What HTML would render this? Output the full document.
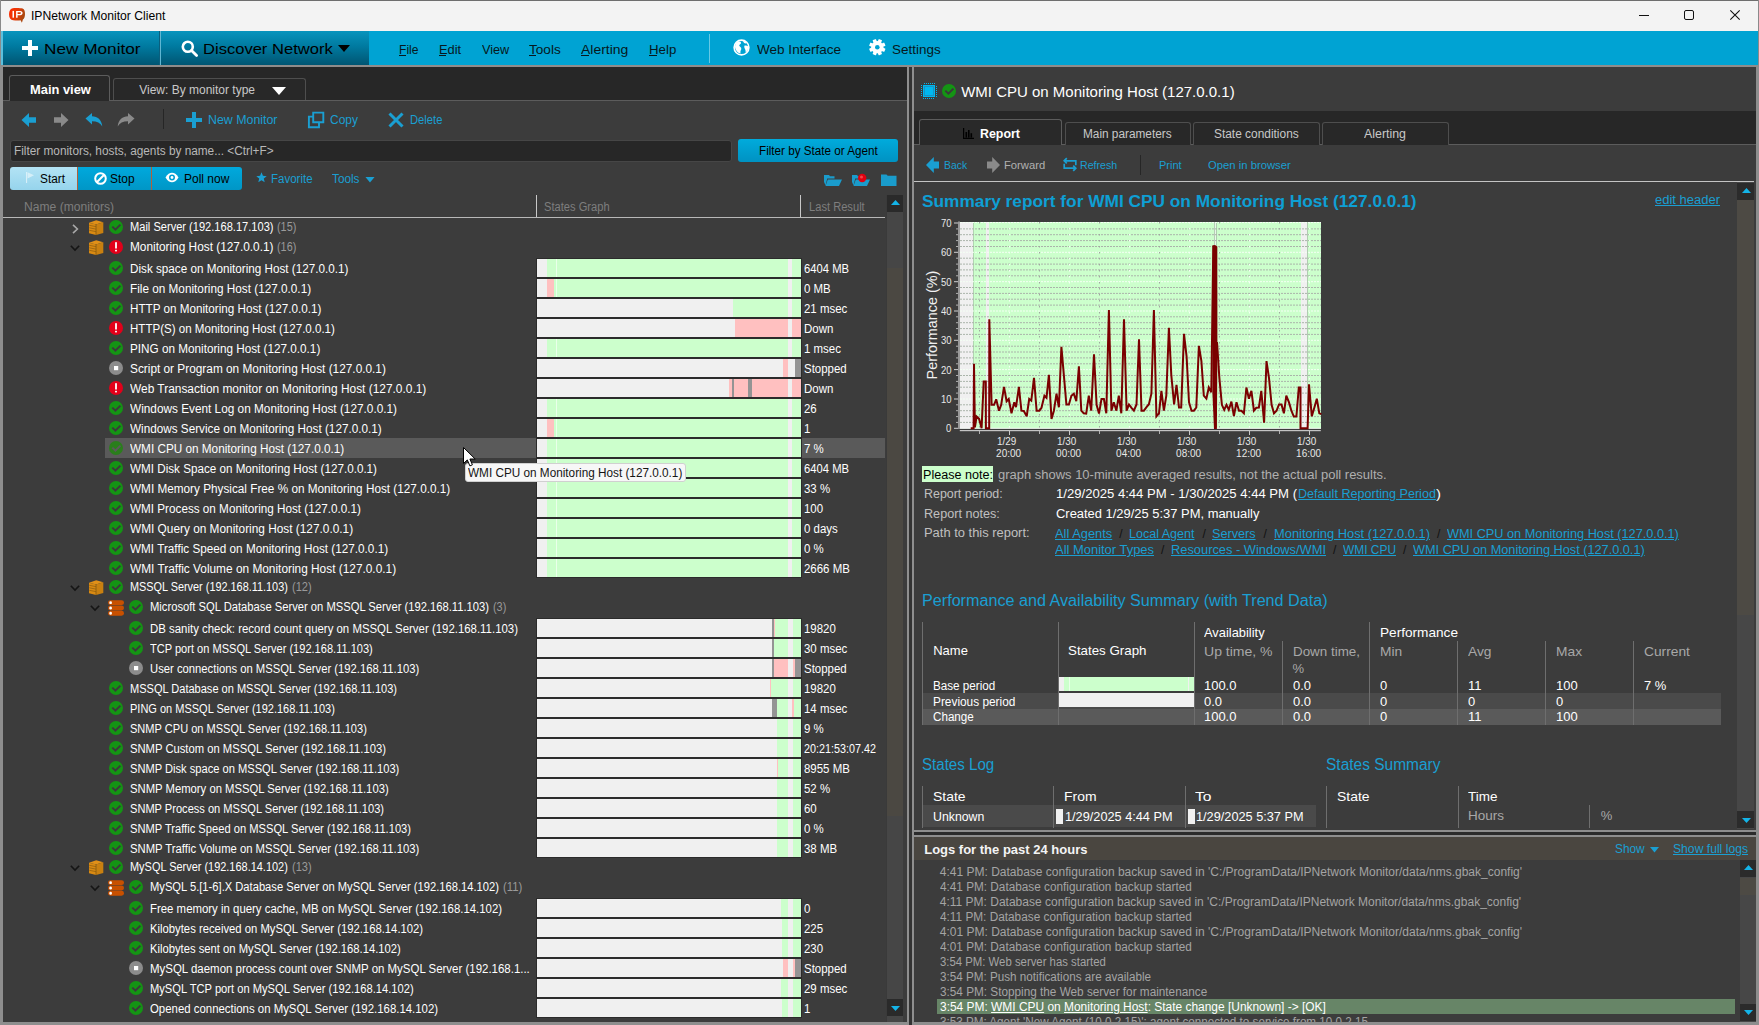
<!DOCTYPE html><html><head><meta charset="utf-8"><title>IPNetwork Monitor Client</title><style>
*{margin:0;padding:0;box-sizing:border-box}
html,body{width:1759px;height:1025px;overflow:hidden;background:#3c3c3c;font-family:"Liberation Sans", sans-serif;}
.t{position:absolute;white-space:pre;}
.r{position:absolute;}
svg{position:absolute;overflow:visible}
.u{text-decoration:underline;}
</style></head><body><div class="r" style="left:0px;top:0px;width:1759px;height:31px;background:#f3f3f3;"></div><div class="r" style="left:0px;top:0px;width:1759px;height:1px;background:#6e6e6e;"></div><div class="r" style="left:0px;top:0px;width:1px;height:31px;background:#8a8a8a;"></div><div class="r" style="left:1758px;top:0px;width:1px;height:31px;background:#8a8a8a;"></div><svg style="left:8px;top:7px" width="18" height="17" viewBox="0 0 18 17"><defs><linearGradient id="lg" x1="0" y1="0" x2="1" y2="0.3"><stop offset="0" stop-color="#ff2a00"/><stop offset="0.55" stop-color="#e83a08"/><stop offset="1" stop-color="#a84810"/></linearGradient></defs><path d="M6 1.1C9 0.8 12.5 0.9 14.6 1.6 16.4 2.2 17 4.3 17 7 17 9.6 16.3 11.8 14.9 12.6L13.9 15.7 12.6 13.3C10.5 13.6 7.5 13.5 5.2 13.2 2.6 12.8 1 11 1 7.2 1 3.7 2.6 1.4 6 1.1z" fill="url(#lg)"/><rect x="4.5" y="3.9" width="1.5" height="6.8" fill="#fff"/><path d="M8.1 3.9H12.3C13.8 3.9 14.6 4.9 14.6 6.1 14.6 7.3 13.8 8.3 12.3 8.3H9.6V10.7H8.1zM9.6 5.2V7H12C12.6 7 13 6.6 13 6.1 13 5.6 12.6 5.2 12 5.2z" fill="#fff" fill-rule="evenodd"/></svg><div class="t" style="left:30.50px;top:10px;font-size:12px;line-height:12px;color:#000;transform:scaleX(1.0119);transform-origin:0 0;">IPNetwork Monitor Client</div><div class="r" style="left:1639px;top:15px;width:10px;height:1px;background:#111;"></div><div class="r" style="left:1684px;top:10px;width:10px;height:10px;border:1px solid #111;border-radius:2px"></div><svg style="left:1730px;top:10px" width="10" height="10" viewBox="0 0 10 10"><path d="M0.3 0.3L9.7 9.7M9.7 0.3L0.3 9.7" stroke="#111" stroke-width="1.1"/></svg><div class="r" style="left:0px;top:31px;width:1759px;height:34px;background:#00a3d3;"></div><div class="r" style="left:0px;top:31px;width:1px;height:36px;background:#8a8a8a;"></div><div class="r" style="left:1px;top:31px;width:2px;height:34px;background:#5cc0de;"></div><div class="r" style="left:1758px;top:31px;width:1px;height:36px;background:#8a8a8a;"></div><div class="r" style="left:3px;top:31px;width:156px;height:34px;background:linear-gradient(#0894bd,#007aa0 45%,#005572);"></div><div class="r" style="left:159px;top:31px;width:1px;height:34px;background:#0a5f7e;"></div><div class="r" style="left:160px;top:31px;width:1px;height:34px;background:#5fb6d2;"></div><div class="r" style="left:161px;top:31px;width:208px;height:34px;background:linear-gradient(#0894bd,#007aa0 45%,#005572);"></div><div class="r" style="left:0px;top:65px;width:1759px;height:2px;background:#8f8c8b;"></div><div class="r" style="left:22px;top:46px;width:16px;height:4px;background:#fff;"></div><div class="r" style="left:28px;top:40px;width:4px;height:16px;background:#fff;"></div><div class="t" style="left:43.80px;top:41px;font-size:15px;line-height:15px;color:#000;transform:scaleX(1.1472);transform-origin:0 0;">New Monitor</div><svg style="left:181px;top:40px" width="17" height="17" viewBox="0 0 17 17"><circle cx="6.8" cy="6.8" r="5" stroke="#fff" stroke-width="2.6" fill="none"/><path d="M10.5 10.5L15.6 15.6" stroke="#fff" stroke-width="2.8" stroke-linecap="round"/></svg><div class="t" style="left:203.00px;top:41px;font-size:15px;line-height:15px;color:#000;transform:scaleX(1.1035);transform-origin:0 0;">Discover Network</div><svg style="left:338px;top:45px" width="12" height="7" viewBox="0 0 12 7"><path d="M0 0h12L6 7z" fill="#000"/></svg><div class="t" style="left:399.10px;top:44px;font-size:12.5px;line-height:12.5px;color:#061820;transform:scaleX(0.9674);transform-origin:0 0;">File</div><div class="r" style="left:399px;top:55px;width:7px;height:1px;background:#061820;"></div><div class="t" style="left:439.10px;top:44px;font-size:12.5px;line-height:12.5px;color:#061820;transform:scaleX(1.0303);transform-origin:0 0;">Edit</div><div class="r" style="left:439px;top:55px;width:7px;height:1px;background:#061820;"></div><div class="t" style="left:482.20px;top:44px;font-size:12.5px;line-height:12.5px;color:#061820;transform:scaleX(1.0158);transform-origin:0 0;">View</div><div class="t" style="left:528.80px;top:44px;font-size:12.5px;line-height:12.5px;color:#061820;transform:scaleX(1.0861);transform-origin:0 0;">Tools</div><div class="r" style="left:529px;top:55px;width:7px;height:1px;background:#061820;"></div><div class="t" style="left:581.00px;top:44px;font-size:12.5px;line-height:12.5px;color:#061820;transform:scaleX(1.1158);transform-origin:0 0;">Alerting</div><div class="r" style="left:581px;top:55px;width:8px;height:1px;background:#061820;"></div><div class="t" style="left:649.20px;top:44px;font-size:12.5px;line-height:12.5px;color:#061820;transform:scaleX(1.0615);transform-origin:0 0;">Help</div><div class="r" style="left:649px;top:55px;width:8px;height:1px;background:#061820;"></div><div class="r" style="left:709px;top:34px;width:1px;height:29px;background:#66c9e6;"></div><svg style="left:733px;top:39px" width="17" height="17" viewBox="0 0 17 17"><circle cx="8.5" cy="8.5" r="7.4" fill="#00a3d3" stroke="#fff" stroke-width="1.6"/><path d="M3 4.2C4.3 2.6 6.6 2.1 7.8 3.2 8.6 4 7.6 5 6.8 5.5 6 6 6.1 7 6.9 7.6 7.9 8.4 8.7 9.4 8.1 10.7 7.6 11.7 7.2 12.7 7.6 14.6 5 14 2.9 11.8 2.2 9.2 1.8 7.3 2.1 5.5 3 4.2z M10 1.8C11.5 2.1 12.9 2.9 13.9 4 13 4.6 11.8 4.5 11.1 3.9 10.6 3.4 10.2 2.7 10 1.8z M11.6 6.6C12.9 6.2 14.5 6.6 15.4 7.5 15.5 10 14.5 12.3 12.7 13.6 12.5 12.3 12.7 11.2 12.1 10.3 11.4 9.4 10.9 7.3 11.6 6.6z" fill="#fff"/></svg><div class="t" style="left:757.40px;top:43px;font-size:13px;line-height:13px;color:#061820;transform:scaleX(1.0421);transform-origin:0 0;">Web Interface</div><svg style="left:868.5px;top:38.8px" width="17" height="17" viewBox="0 0 17 17"><g fill="#fff" transform="translate(8.3 8.2)"><rect x="-1.8" y="-8.2" width="3.6" height="4" rx="0.6" transform="rotate(22.5)"/><rect x="-1.8" y="-8.2" width="3.6" height="4" rx="0.6" transform="rotate(67.5)"/><rect x="-1.8" y="-8.2" width="3.6" height="4" rx="0.6" transform="rotate(112.5)"/><rect x="-1.8" y="-8.2" width="3.6" height="4" rx="0.6" transform="rotate(157.5)"/><rect x="-1.8" y="-8.2" width="3.6" height="4" rx="0.6" transform="rotate(202.5)"/><rect x="-1.8" y="-8.2" width="3.6" height="4" rx="0.6" transform="rotate(247.5)"/><rect x="-1.8" y="-8.2" width="3.6" height="4" rx="0.6" transform="rotate(292.5)"/><rect x="-1.8" y="-8.2" width="3.6" height="4" rx="0.6" transform="rotate(337.5)"/><circle r="6.1"/></g><circle cx="8.3" cy="8.2" r="2.3" fill="#00a3d3"/></svg><div class="t" style="left:891.90px;top:43px;font-size:13px;line-height:13px;color:#061820;transform:scaleX(1.0365);transform-origin:0 0;">Settings</div><div class="r" style="left:0px;top:67px;width:3px;height:958px;background:#8e8e8e;"></div><div class="r" style="left:0px;top:1022px;width:1759px;height:3px;background:#8e8e8e;"></div><div class="r" style="left:1756px;top:67px;width:3px;height:958px;background:#8e8e8e;"></div><div class="r" style="left:3px;top:67px;width:904px;height:33px;background:#272727;"></div><div class="r" style="left:3px;top:100px;width:904px;height:922px;background:#3c3c3c;"></div><div class="r" style="left:907px;top:67px;width:2px;height:955px;background:#8f8f8f;"></div><div class="r" style="left:909px;top:67px;width:3px;height:958px;background:#333333;"></div><div class="r" style="left:912px;top:67px;width:2px;height:955px;background:#8f8f8f;"></div><div class="r" style="left:9px;top:75px;width:101px;height:26px;background:#292929;border:1px solid #5c5c5c;border-bottom:none;border-radius:3px 3px 0 0"></div><div class="r" style="left:3px;top:100px;width:6px;height:1px;background:#5c5c5c;"></div><div class="r" style="left:110px;top:100px;width:797px;height:1px;background:#5c5c5c;"></div><div class="t" style="left:29.50px;top:84px;font-size:12px;line-height:12px;color:#ffffff;font-weight:bold;transform:scaleX(1.0743);transform-origin:0 0;">Main view</div><div class="r" style="left:113px;top:78px;width:193px;height:22px;background:#282828;border:1px solid #4e4e4e;border-bottom:none;border-radius:3px 3px 0 0"></div><div class="t" style="left:139.20px;top:84px;font-size:12px;line-height:12px;color:#c8c8c8;">View: By monitor type</div><svg style="left:271.5px;top:86.5px" width="14" height="8" viewBox="0 0 14 8"><path d="M0 0h14L7 8z" fill="#fff"/></svg><svg style="left:21px;top:112px" width="16" height="16" viewBox="0 0 16 16"><path d="M0.5 8L8 1v4.2h7v5.6H8V15z" fill="#1a9fd2"/></svg><svg style="left:53px;top:112px" width="16" height="16" viewBox="0 0 16 16"><path d="M15.5 8L8 1v4.2H1v5.6h7V15z" fill="#8a8a8a"/></svg><svg style="left:85px;top:112px" width="18" height="16" viewBox="0 0 18 16"><path d="M0.5 6.5L7 1v3.3c5.5 0 9.5 3.5 10.3 10.2C15.5 11 12 9.3 7 9.3V12.5z" fill="#1a9fd2"/></svg><svg style="left:117px;top:112px" width="18" height="16" viewBox="0 0 18 16"><path d="M17.5 6.5L11 1v3.3C5.5 4.3 1.5 7.8 0.7 14.5 2.5 11 6 9.3 11 9.3V12.5z" fill="#8a8a8a"/></svg><div class="r" style="left:163px;top:109px;width:1px;height:20px;background:#262626;"></div><div class="r" style="left:185.5px;top:117.5px;width:16.5px;height:4px;background:#1a9fd2;"></div><div class="r" style="left:191.8px;top:111.5px;width:4px;height:16.5px;background:#1a9fd2;"></div><div class="t" style="left:208.30px;top:114px;font-size:12px;line-height:12px;color:#1a9fd2;transform:scaleX(1.0318);transform-origin:0 0;">New Monitor</div><svg style="left:307px;top:111px" width="18" height="18" viewBox="0 0 18 18"><path d="M6.2 1.6H16.3V11.2H6.2z" fill="none" stroke="#1a9fd2" stroke-width="1.9"/><path d="M6.2 5.6H1.9V16.2H12V11.2" fill="none" stroke="#1a9fd2" stroke-width="1.9"/></svg><div class="t" style="left:330.00px;top:114px;font-size:12px;line-height:12px;color:#1a9fd2;transform:scaleX(0.9959);transform-origin:0 0;">Copy</div><svg style="left:388px;top:112px" width="16" height="16" viewBox="0 0 16 16"><path d="M1.5 1.5L14.5 14.5M14.5 1.5L1.5 14.5" stroke="#1a9fd2" stroke-width="3"/></svg><div class="t" style="left:410.40px;top:114px;font-size:12px;line-height:12px;color:#1a9fd2;transform:scaleX(0.9341);transform-origin:0 0;">Delete</div><div class="r" style="left:10px;top:140px;width:722px;height:22px;background:#272727;border:1px solid #464646;border-radius:3px"></div><div class="t" style="left:14.20px;top:145px;font-size:12px;line-height:12px;color:#b8b8b8;transform:scaleX(0.9841);transform-origin:0 0;">Filter monitors, hosts, agents by name... &lt;Ctrl+F&gt;</div><div class="r" style="left:738px;top:139px;width:160px;height:23px;background:linear-gradient(#00abdc,#0092c2);border-radius:3px"></div><div class="t" style="left:758.70px;top:145px;font-size:12px;line-height:12px;color:#000;transform:scaleX(0.9733);transform-origin:0 0;">Filter by State or Agent</div><div class="r" style="left:10px;top:167px;width:67px;height:23px;background:linear-gradient(#b3e3f5,#96d4ec);border-radius:3px 0 0 3px"></div><div class="r" style="left:77px;top:167px;width:1px;height:23px;background:#b0603a;"></div><div class="r" style="left:78px;top:167px;width:73px;height:23px;background:linear-gradient(#00a9dd,#0096c6);"></div><div class="r" style="left:151px;top:167px;width:1px;height:23px;background:#b0603a;"></div><div class="r" style="left:152px;top:167px;width:90px;height:23px;background:linear-gradient(#00a9dd,#0096c6);border-radius:0 3px 3px 0"></div><svg style="left:26px;top:172px" width="9" height="11" viewBox="0 0 9 11"><rect x="0" y="0" width="1.1" height="11" fill="#e4f4fa" opacity="0.8"/><path d="M1.5 0.3L8 3.3 1.5 6.4z" fill="#e4f4fa" opacity="0.75"/></svg><div class="t" style="left:40.00px;top:173px;font-size:12.5px;line-height:12.5px;color:#000;transform:scaleX(0.9467);transform-origin:0 0;">Start</div><svg style="left:93.5px;top:171.5px" width="13" height="13" viewBox="0 0 13 13"><circle cx="6.5" cy="6.5" r="5.3" stroke="#fff" stroke-width="2" fill="none"/><path d="M2.8 10.2L10.2 2.8" stroke="#fff" stroke-width="2"/></svg><div class="t" style="left:110.00px;top:173px;font-size:12.5px;line-height:12.5px;color:#000;transform:scaleX(0.9565);transform-origin:0 0;">Stop</div><svg style="left:164.5px;top:172.3px" width="14" height="11" viewBox="0 0 14 11"><path d="M0.5 5.5C2.5 2 4.8 0.8 7 0.8S11.5 2 13.5 5.5C11.5 9 9.2 10.2 7 10.2S2.5 9 0.5 5.5z" fill="#fff"/><circle cx="7" cy="5.5" r="3" fill="#00a0d2"/><circle cx="7" cy="5.5" r="1.4" fill="#fff"/></svg><div class="t" style="left:184.30px;top:173px;font-size:12.5px;line-height:12.5px;color:#000;transform:scaleX(0.9587);transform-origin:0 0;">Poll now</div><svg style="left:256px;top:172.3px" width="11" height="11" viewBox="0 0 12 12"><path d="M6 0.3l1.6 3.9 4.1 0.3-3.2 2.7 1 4.1L6 9 2.5 11.3l1-4.1L0.3 4.5l4.1-0.3z" fill="#1a9fd2"/></svg><div class="t" style="left:271.40px;top:173px;font-size:12px;line-height:12px;color:#1a9fd2;transform:scaleX(0.9594);transform-origin:0 0;">Favorite</div><div class="t" style="left:332.20px;top:173px;font-size:12px;line-height:12px;color:#1a9fd2;transform:scaleX(0.9816);transform-origin:0 0;">Tools</div><svg style="left:364.5px;top:176.8px" width="10" height="5.5" viewBox="0 0 10 6"><path d="M0 0h10L5 6z" fill="#1a9fd2"/></svg><svg style="left:824px;top:174px" width="18" height="13" viewBox="0 0 18 13"><path d="M0 1h5l1 1.2h4.5v2.3H3.2L1.6 11.5 0 8z" fill="#1a9ccc"/><path d="M3.8 5.5H18l-3 6.5H1.5z" fill="#1a9ccc"/></svg><svg style="left:852px;top:174px" width="18" height="13" viewBox="0 0 18 13"><path d="M0 1h5l1 1.2h4.5v2.3H3.2L1.6 11.5 0 8z" fill="#1a9ccc"/><path d="M3.8 5.5H18l-3 6.5H1.5z" fill="#1a9ccc"/><circle cx="10.2" cy="4" r="4.2" fill="#e00010"/><circle cx="9.5" cy="3" r="1.5" fill="#ff6060" opacity="0.7"/></svg><svg style="left:881px;top:174px" width="16" height="12" viewBox="0 0 16 12"><path d="M0 0.5h5.5l1.2 1.2H15.5V12H0z" fill="#1a9ccc"/></svg><div class="t" style="left:24.30px;top:201px;font-size:12px;line-height:12px;color:#7e7e7e;transform:scaleX(1.0083);transform-origin:0 0;">Name (monitors)</div><div class="r" style="left:536px;top:195px;width:1px;height:22px;background:#c8c8c8;"></div><div class="t" style="left:544.30px;top:201px;font-size:12px;line-height:12px;color:#7e7e7e;transform:scaleX(0.9276);transform-origin:0 0;">States Graph</div><div class="r" style="left:800px;top:195px;width:1px;height:22px;background:#c8c8c8;"></div><div class="t" style="left:808.50px;top:201px;font-size:12px;line-height:12px;color:#7e7e7e;transform:scaleX(0.9279);transform-origin:0 0;">Last Result</div><div class="r" style="left:3px;top:217px;width:882px;height:1px;background:#b8b8b8;"></div><div class="r" style="left:886px;top:195px;width:17px;height:827px;background:#464646;"></div><div class="r" style="left:886px;top:195px;width:1px;height:827px;background:#3a3a3a;"></div><div class="r" style="left:887px;top:195px;width:16px;height:17px;background:#2a2a2a;"></div><svg style="left:891px;top:200px" width="9" height="5" viewBox="0 0 9 5"><path d="M0 5h9L4.5 0z" fill="#14b4e8"/></svg><div class="r" style="left:887px;top:268px;width:16px;height:548px;background:#4b4842;"></div><div class="r" style="left:887px;top:999px;width:16px;height:17px;background:#2a2a2a;"></div><svg style="left:891px;top:1006px" width="9" height="5" viewBox="0 0 9 5"><path d="M0 0h9L4.5 5z" fill="#14b4e8"/></svg><svg style="left:71.5px;top:224px" width="7" height="10" viewBox="0 0 7 10"><path d="M1 0.8L5.4 5 1 9.2" stroke="#a8a8a8" stroke-width="1.6" fill="none"/></svg><svg style="left:88.8px;top:220px" width="15" height="15" viewBox="0 0 15 15"><path d="M0 2.8L7.2 0.2 14.3 2.2 7 4.4z" fill="#e09018"/><path d="M0 2.8L7 4.4V14.9L0 13.2z" fill="#d98a12"/><path d="M7 4.4L14.3 2.2V13L7 14.9z" fill="#c98010"/><path d="M0.3 5.3L6.8 6.6M0.3 7.8L6.8 9.1M0.3 10.3L6.8 11.6" stroke="#8a5a10" stroke-width="0.7"/><path d="M7 4.4V14.9" stroke="#6a4a10" stroke-width="0.6"/></svg><svg style="left:109px;top:220px" width="14" height="14" viewBox="0 0 14 14"><circle cx="7" cy="7" r="7" fill="#149414"/><path d="M3.3 6.6L6.4 9.7L11.4 4.6" stroke="#3a3a3a" stroke-width="2" fill="none"/></svg><div class="t" style="left:130.30px;top:221px;font-size:12px;line-height:12px;color:#ffffff;transform:scaleX(0.9233);transform-origin:0 0;">Mail Server (192.168.17.103)</div><div class="t" style="left:277.40px;top:221px;font-size:12px;line-height:12px;color:#9a9a9a;transform:scaleX(0.9042);transform-origin:0 0;">(15)</div><svg style="left:69.5px;top:245px" width="10" height="6" viewBox="0 0 10 6"><path d="M0.8 0.8L5 5 9.2 0.8" stroke="#151515" stroke-width="1.6" fill="none"/></svg><svg style="left:88.8px;top:240px" width="15" height="15" viewBox="0 0 15 15"><path d="M0 2.8L7.2 0.2 14.3 2.2 7 4.4z" fill="#e09018"/><path d="M0 2.8L7 4.4V14.9L0 13.2z" fill="#d98a12"/><path d="M7 4.4L14.3 2.2V13L7 14.9z" fill="#c98010"/><path d="M0.3 5.3L6.8 6.6M0.3 7.8L6.8 9.1M0.3 10.3L6.8 11.6" stroke="#8a5a10" stroke-width="0.7"/><path d="M7 4.4V14.9" stroke="#6a4a10" stroke-width="0.6"/></svg><svg style="left:109px;top:240px" width="14" height="14" viewBox="0 0 14 14"><circle cx="7" cy="7" r="7" fill="#e2001a"/><rect x="6.1" y="2.2" width="1.8" height="6.3" fill="#fff"/><rect x="6.1" y="9.8" width="1.8" height="1.6" fill="#fff"/></svg><div class="t" style="left:130.30px;top:241px;font-size:12px;line-height:12px;color:#ffffff;transform:scaleX(0.9869);transform-origin:0 0;">Monitoring Host (127.0.0.1)</div><div class="t" style="left:277.40px;top:241px;font-size:12px;line-height:12px;color:#9a9a9a;transform:scaleX(0.9042);transform-origin:0 0;">(16)</div><svg style="left:109px;top:261px" width="14" height="14" viewBox="0 0 14 14"><circle cx="7" cy="7" r="7" fill="#149414"/><path d="M3.3 6.6L6.4 9.7L11.4 4.6" stroke="#3a3a3a" stroke-width="2" fill="none"/></svg><div class="t" style="left:130.30px;top:263px;font-size:12px;line-height:12px;color:#ffffff;transform:scaleX(0.9741);transform-origin:0 0;">Disk space on Monitoring Host (127.0.0.1)</div><div class="r" style="left:536px;top:258px;width:266px;height:20px;background:#2b2b2b;"></div><div class="r" style="left:537px;top:259px;width:264px;height:18px;background:#f0f0f0;"></div><div class="r" style="left:547px;top:259px;width:241px;height:18px;background:#ccffcc;"></div><div class="r" style="left:556px;top:259px;width:1px;height:18px;background:#eaffea;"></div><div class="r" style="left:792px;top:259px;width:9px;height:18px;background:#ccffcc;"></div><div class="t" style="left:804.00px;top:263px;font-size:12px;line-height:12px;color:#ffffff;transform:scaleX(0.9369);transform-origin:0 0;">6404 MB</div><svg style="left:109px;top:281px" width="14" height="14" viewBox="0 0 14 14"><circle cx="7" cy="7" r="7" fill="#149414"/><path d="M3.3 6.6L6.4 9.7L11.4 4.6" stroke="#3a3a3a" stroke-width="2" fill="none"/></svg><div class="t" style="left:130.30px;top:283px;font-size:12px;line-height:12px;color:#ffffff;transform:scaleX(0.9802);transform-origin:0 0;">File on Monitoring Host (127.0.0.1)</div><div class="r" style="left:536px;top:278px;width:266px;height:20px;background:#2b2b2b;"></div><div class="r" style="left:537px;top:279px;width:264px;height:18px;background:#f0f0f0;"></div><div class="r" style="left:547px;top:279px;width:241px;height:18px;background:#ccffcc;"></div><div class="r" style="left:547px;top:279px;width:7px;height:18px;background:#ffc0c0;"></div><div class="r" style="left:556px;top:279px;width:1px;height:18px;background:#eaffea;"></div><div class="r" style="left:792px;top:279px;width:9px;height:18px;background:#ccffcc;"></div><div class="t" style="left:804.00px;top:283px;font-size:12px;line-height:12px;color:#ffffff;transform:scaleX(0.9550);transform-origin:0 0;">0 MB</div><svg style="left:109px;top:301px" width="14" height="14" viewBox="0 0 14 14"><circle cx="7" cy="7" r="7" fill="#149414"/><path d="M3.3 6.6L6.4 9.7L11.4 4.6" stroke="#3a3a3a" stroke-width="2" fill="none"/></svg><div class="t" style="left:130.30px;top:303px;font-size:12px;line-height:12px;color:#ffffff;transform:scaleX(0.9733);transform-origin:0 0;">HTTP on Monitoring Host (127.0.0.1)</div><div class="r" style="left:536px;top:298px;width:266px;height:20px;background:#2b2b2b;"></div><div class="r" style="left:537px;top:299px;width:264px;height:18px;background:#f0f0f0;"></div><div class="r" style="left:733px;top:299px;width:55px;height:18px;background:#ccffcc;"></div><div class="r" style="left:792px;top:299px;width:9px;height:18px;background:#ccffcc;"></div><div class="t" style="left:804.00px;top:303px;font-size:12px;line-height:12px;color:#ffffff;transform:scaleX(0.9550);transform-origin:0 0;">21 msec</div><svg style="left:109px;top:321px" width="14" height="14" viewBox="0 0 14 14"><circle cx="7" cy="7" r="7" fill="#e2001a"/><rect x="6.1" y="2.2" width="1.8" height="6.3" fill="#fff"/><rect x="6.1" y="9.8" width="1.8" height="1.6" fill="#fff"/></svg><div class="t" style="left:130.30px;top:323px;font-size:12px;line-height:12px;color:#ffffff;transform:scaleX(0.9631);transform-origin:0 0;">HTTP(S) on Monitoring Host (127.0.0.1)</div><div class="r" style="left:536px;top:318px;width:266px;height:20px;background:#2b2b2b;"></div><div class="r" style="left:537px;top:319px;width:264px;height:18px;background:#f0f0f0;"></div><div class="r" style="left:735px;top:319px;width:53px;height:18px;background:#ffc0c0;"></div><div class="r" style="left:792px;top:319px;width:9px;height:18px;background:#ffc0c0;"></div><div class="t" style="left:804.00px;top:323px;font-size:12px;line-height:12px;color:#ffffff;transform:scaleX(0.9550);transform-origin:0 0;">Down</div><svg style="left:109px;top:341px" width="14" height="14" viewBox="0 0 14 14"><circle cx="7" cy="7" r="7" fill="#149414"/><path d="M3.3 6.6L6.4 9.7L11.4 4.6" stroke="#3a3a3a" stroke-width="2" fill="none"/></svg><div class="t" style="left:130.30px;top:343px;font-size:12px;line-height:12px;color:#ffffff;transform:scaleX(0.9771);transform-origin:0 0;">PING on Monitoring Host (127.0.0.1)</div><div class="r" style="left:536px;top:338px;width:266px;height:20px;background:#2b2b2b;"></div><div class="r" style="left:537px;top:339px;width:264px;height:18px;background:#f0f0f0;"></div><div class="r" style="left:547px;top:339px;width:241px;height:18px;background:#ccffcc;"></div><div class="r" style="left:556px;top:339px;width:1px;height:18px;background:#eaffea;"></div><div class="r" style="left:792px;top:339px;width:9px;height:18px;background:#ccffcc;"></div><div class="t" style="left:804.00px;top:343px;font-size:12px;line-height:12px;color:#ffffff;transform:scaleX(0.9550);transform-origin:0 0;">1 msec</div><svg style="left:109px;top:361px" width="14" height="14" viewBox="0 0 14 14"><circle cx="7" cy="7" r="7" fill="#8c8c8c"/><rect x="5" y="5" width="4.2" height="4.2" fill="#fff"/></svg><div class="t" style="left:130.30px;top:363px;font-size:12px;line-height:12px;color:#ffffff;transform:scaleX(0.9863);transform-origin:0 0;">Script or Program on Monitoring Host (127.0.0.1)</div><div class="r" style="left:536px;top:358px;width:266px;height:20px;background:#2b2b2b;"></div><div class="r" style="left:537px;top:359px;width:264px;height:18px;background:#f0f0f0;"></div><div class="r" style="left:783px;top:359px;width:5px;height:18px;background:#ffc0c0;"></div><div class="r" style="left:795px;top:359px;width:6px;height:18px;background:#949494;"></div><div class="t" style="left:804.00px;top:363px;font-size:12px;line-height:12px;color:#ffffff;transform:scaleX(0.9550);transform-origin:0 0;">Stopped</div><svg style="left:109px;top:381px" width="14" height="14" viewBox="0 0 14 14"><circle cx="7" cy="7" r="7" fill="#e2001a"/><rect x="6.1" y="2.2" width="1.8" height="6.3" fill="#fff"/><rect x="6.1" y="9.8" width="1.8" height="1.6" fill="#fff"/></svg><div class="t" style="left:130.30px;top:383px;font-size:12px;line-height:12px;color:#ffffff;transform:scaleX(0.9923);transform-origin:0 0;">Web Transaction monitor on Monitoring Host (127.0.0.1)</div><div class="r" style="left:536px;top:378px;width:266px;height:20px;background:#2b2b2b;"></div><div class="r" style="left:537px;top:379px;width:264px;height:18px;background:#f0f0f0;"></div><div class="r" style="left:729px;top:379px;width:3px;height:18px;background:#ffc0c0;"></div><div class="r" style="left:732px;top:379px;width:2px;height:18px;background:#949494;"></div><div class="r" style="left:734px;top:379px;width:14px;height:18px;background:#ffc0c0;"></div><div class="r" style="left:748px;top:379px;width:4px;height:18px;background:#949494;"></div><div class="r" style="left:752px;top:379px;width:36px;height:18px;background:#ffc0c0;"></div><div class="r" style="left:792px;top:379px;width:9px;height:18px;background:#ffc0c0;"></div><div class="t" style="left:804.00px;top:383px;font-size:12px;line-height:12px;color:#ffffff;transform:scaleX(0.9550);transform-origin:0 0;">Down</div><svg style="left:109px;top:401px" width="14" height="14" viewBox="0 0 14 14"><circle cx="7" cy="7" r="7" fill="#149414"/><path d="M3.3 6.6L6.4 9.7L11.4 4.6" stroke="#3a3a3a" stroke-width="2" fill="none"/></svg><div class="t" style="left:130.30px;top:403px;font-size:12px;line-height:12px;color:#ffffff;transform:scaleX(0.9835);transform-origin:0 0;">Windows Event Log on Monitoring Host (127.0.0.1)</div><div class="r" style="left:536px;top:398px;width:266px;height:20px;background:#2b2b2b;"></div><div class="r" style="left:537px;top:399px;width:264px;height:18px;background:#f0f0f0;"></div><div class="r" style="left:547px;top:399px;width:241px;height:18px;background:#ccffcc;"></div><div class="r" style="left:556px;top:399px;width:1px;height:18px;background:#eaffea;"></div><div class="r" style="left:792px;top:399px;width:9px;height:18px;background:#ccffcc;"></div><div class="t" style="left:804.00px;top:403px;font-size:12px;line-height:12px;color:#ffffff;transform:scaleX(0.9550);transform-origin:0 0;">26</div><svg style="left:109px;top:421px" width="14" height="14" viewBox="0 0 14 14"><circle cx="7" cy="7" r="7" fill="#149414"/><path d="M3.3 6.6L6.4 9.7L11.4 4.6" stroke="#3a3a3a" stroke-width="2" fill="none"/></svg><div class="t" style="left:130.30px;top:423px;font-size:12px;line-height:12px;color:#ffffff;transform:scaleX(0.9777);transform-origin:0 0;">Windows Service on Monitoring Host (127.0.0.1)</div><div class="r" style="left:536px;top:418px;width:266px;height:20px;background:#2b2b2b;"></div><div class="r" style="left:537px;top:419px;width:264px;height:18px;background:#f0f0f0;"></div><div class="r" style="left:547px;top:419px;width:241px;height:18px;background:#ccffcc;"></div><div class="r" style="left:547px;top:419px;width:7px;height:18px;background:#ffc0c0;"></div><div class="r" style="left:556px;top:419px;width:1px;height:18px;background:#eaffea;"></div><div class="r" style="left:792px;top:419px;width:9px;height:18px;background:#ccffcc;"></div><div class="t" style="left:804.00px;top:423px;font-size:12px;line-height:12px;color:#ffffff;transform:scaleX(0.9550);transform-origin:0 0;">1</div><div class="r" style="left:105px;top:438px;width:780px;height:20px;background:#5a5a5a;"></div><svg style="left:109px;top:441px" width="14" height="14" viewBox="0 0 14 14"><circle cx="7" cy="7" r="7" fill="#2a7e1c"/><path d="M3.3 6.6L6.4 9.7L11.4 4.6" stroke="#5a5a5a" stroke-width="2" fill="none"/></svg><div class="t" style="left:130.30px;top:443px;font-size:12px;line-height:12px;color:#ffffff;transform:scaleX(0.9792);transform-origin:0 0;">WMI CPU on Monitoring Host (127.0.0.1)</div><div class="r" style="left:536px;top:438px;width:266px;height:20px;background:#2b2b2b;"></div><div class="r" style="left:537px;top:439px;width:264px;height:18px;background:#f0f0f0;"></div><div class="r" style="left:547px;top:439px;width:241px;height:18px;background:#ccffcc;"></div><div class="r" style="left:556px;top:439px;width:1px;height:18px;background:#eaffea;"></div><div class="r" style="left:792px;top:439px;width:9px;height:18px;background:#ccffcc;"></div><div class="t" style="left:804.00px;top:443px;font-size:12px;line-height:12px;color:#ffffff;transform:scaleX(0.9550);transform-origin:0 0;">7 %</div><svg style="left:109px;top:461px" width="14" height="14" viewBox="0 0 14 14"><circle cx="7" cy="7" r="7" fill="#149414"/><path d="M3.3 6.6L6.4 9.7L11.4 4.6" stroke="#3a3a3a" stroke-width="2" fill="none"/></svg><div class="t" style="left:130.30px;top:463px;font-size:12px;line-height:12px;color:#ffffff;transform:scaleX(0.9720);transform-origin:0 0;">WMI Disk Space on Monitoring Host (127.0.0.1)</div><div class="r" style="left:536px;top:458px;width:266px;height:20px;background:#2b2b2b;"></div><div class="r" style="left:537px;top:459px;width:264px;height:18px;background:#f0f0f0;"></div><div class="r" style="left:547px;top:459px;width:241px;height:18px;background:#ccffcc;"></div><div class="r" style="left:556px;top:459px;width:1px;height:18px;background:#eaffea;"></div><div class="r" style="left:792px;top:459px;width:9px;height:18px;background:#ccffcc;"></div><div class="t" style="left:804.00px;top:463px;font-size:12px;line-height:12px;color:#ffffff;transform:scaleX(0.9369);transform-origin:0 0;">6404 MB</div><svg style="left:109px;top:481px" width="14" height="14" viewBox="0 0 14 14"><circle cx="7" cy="7" r="7" fill="#149414"/><path d="M3.3 6.6L6.4 9.7L11.4 4.6" stroke="#3a3a3a" stroke-width="2" fill="none"/></svg><div class="t" style="left:130.30px;top:483px;font-size:12px;line-height:12px;color:#ffffff;transform:scaleX(0.9799);transform-origin:0 0;">WMI Memory Physical Free % on Monitoring Host (127.0.0.1)</div><div class="r" style="left:536px;top:478px;width:266px;height:20px;background:#2b2b2b;"></div><div class="r" style="left:537px;top:479px;width:264px;height:18px;background:#f0f0f0;"></div><div class="r" style="left:547px;top:479px;width:241px;height:18px;background:#ccffcc;"></div><div class="r" style="left:556px;top:479px;width:1px;height:18px;background:#eaffea;"></div><div class="r" style="left:792px;top:479px;width:9px;height:18px;background:#ccffcc;"></div><div class="t" style="left:804.00px;top:483px;font-size:12px;line-height:12px;color:#ffffff;transform:scaleX(0.9550);transform-origin:0 0;">33 %</div><svg style="left:109px;top:501px" width="14" height="14" viewBox="0 0 14 14"><circle cx="7" cy="7" r="7" fill="#149414"/><path d="M3.3 6.6L6.4 9.7L11.4 4.6" stroke="#3a3a3a" stroke-width="2" fill="none"/></svg><div class="t" style="left:130.30px;top:503px;font-size:12px;line-height:12px;color:#ffffff;transform:scaleX(0.9756);transform-origin:0 0;">WMI Process on Monitoring Host (127.0.0.1)</div><div class="r" style="left:536px;top:498px;width:266px;height:20px;background:#2b2b2b;"></div><div class="r" style="left:537px;top:499px;width:264px;height:18px;background:#f0f0f0;"></div><div class="r" style="left:547px;top:499px;width:241px;height:18px;background:#ccffcc;"></div><div class="r" style="left:556px;top:499px;width:1px;height:18px;background:#eaffea;"></div><div class="r" style="left:792px;top:499px;width:9px;height:18px;background:#ccffcc;"></div><div class="t" style="left:804.00px;top:503px;font-size:12px;line-height:12px;color:#ffffff;transform:scaleX(0.9550);transform-origin:0 0;">100</div><svg style="left:109px;top:521px" width="14" height="14" viewBox="0 0 14 14"><circle cx="7" cy="7" r="7" fill="#149414"/><path d="M3.3 6.6L6.4 9.7L11.4 4.6" stroke="#3a3a3a" stroke-width="2" fill="none"/></svg><div class="t" style="left:130.30px;top:523px;font-size:12px;line-height:12px;color:#ffffff;transform:scaleX(0.9868);transform-origin:0 0;">WMI Query on Monitoring Host (127.0.0.1)</div><div class="r" style="left:536px;top:518px;width:266px;height:20px;background:#2b2b2b;"></div><div class="r" style="left:537px;top:519px;width:264px;height:18px;background:#f0f0f0;"></div><div class="r" style="left:547px;top:519px;width:241px;height:18px;background:#ccffcc;"></div><div class="r" style="left:556px;top:519px;width:1px;height:18px;background:#eaffea;"></div><div class="r" style="left:792px;top:519px;width:9px;height:18px;background:#ccffcc;"></div><div class="t" style="left:804.00px;top:523px;font-size:12px;line-height:12px;color:#ffffff;transform:scaleX(0.9550);transform-origin:0 0;">0 days</div><svg style="left:109px;top:541px" width="14" height="14" viewBox="0 0 14 14"><circle cx="7" cy="7" r="7" fill="#149414"/><path d="M3.3 6.6L6.4 9.7L11.4 4.6" stroke="#3a3a3a" stroke-width="2" fill="none"/></svg><div class="t" style="left:130.30px;top:543px;font-size:12px;line-height:12px;color:#ffffff;transform:scaleX(0.9780);transform-origin:0 0;">WMI Traffic Speed on Monitoring Host (127.0.0.1)</div><div class="r" style="left:536px;top:538px;width:266px;height:20px;background:#2b2b2b;"></div><div class="r" style="left:537px;top:539px;width:264px;height:18px;background:#f0f0f0;"></div><div class="r" style="left:547px;top:539px;width:241px;height:18px;background:#ccffcc;"></div><div class="r" style="left:556px;top:539px;width:1px;height:18px;background:#eaffea;"></div><div class="r" style="left:792px;top:539px;width:9px;height:18px;background:#ccffcc;"></div><div class="t" style="left:804.00px;top:543px;font-size:12px;line-height:12px;color:#ffffff;transform:scaleX(0.9550);transform-origin:0 0;">0 %</div><svg style="left:109px;top:561px" width="14" height="14" viewBox="0 0 14 14"><circle cx="7" cy="7" r="7" fill="#149414"/><path d="M3.3 6.6L6.4 9.7L11.4 4.6" stroke="#3a3a3a" stroke-width="2" fill="none"/></svg><div class="t" style="left:130.30px;top:563px;font-size:12px;line-height:12px;color:#ffffff;transform:scaleX(0.9884);transform-origin:0 0;">WMI Traffic Volume on Monitoring Host (127.0.0.1)</div><div class="r" style="left:536px;top:558px;width:266px;height:20px;background:#2b2b2b;"></div><div class="r" style="left:537px;top:559px;width:264px;height:18px;background:#f0f0f0;"></div><div class="r" style="left:547px;top:559px;width:241px;height:18px;background:#ccffcc;"></div><div class="r" style="left:556px;top:559px;width:1px;height:18px;background:#eaffea;"></div><div class="r" style="left:792px;top:559px;width:9px;height:18px;background:#ccffcc;"></div><div class="t" style="left:804.00px;top:563px;font-size:12px;line-height:12px;color:#ffffff;transform:scaleX(0.9550);transform-origin:0 0;">2666 MB</div><svg style="left:69.5px;top:585px" width="10" height="6" viewBox="0 0 10 6"><path d="M0.8 0.8L5 5 9.2 0.8" stroke="#151515" stroke-width="1.6" fill="none"/></svg><svg style="left:88.8px;top:580px" width="15" height="15" viewBox="0 0 15 15"><path d="M0 2.8L7.2 0.2 14.3 2.2 7 4.4z" fill="#e09018"/><path d="M0 2.8L7 4.4V14.9L0 13.2z" fill="#d98a12"/><path d="M7 4.4L14.3 2.2V13L7 14.9z" fill="#c98010"/><path d="M0.3 5.3L6.8 6.6M0.3 7.8L6.8 9.1M0.3 10.3L6.8 11.6" stroke="#8a5a10" stroke-width="0.7"/><path d="M7 4.4V14.9" stroke="#6a4a10" stroke-width="0.6"/></svg><svg style="left:109px;top:580px" width="14" height="14" viewBox="0 0 14 14"><circle cx="7" cy="7" r="7" fill="#149414"/><path d="M3.3 6.6L6.4 9.7L11.4 4.6" stroke="#3a3a3a" stroke-width="2" fill="none"/></svg><div class="t" style="left:130.30px;top:581px;font-size:12px;line-height:12px;color:#ffffff;transform:scaleX(0.9064);transform-origin:0 0;">MSSQL Server (192.168.11.103)</div><div class="t" style="left:291.70px;top:581px;font-size:12px;line-height:12px;color:#9a9a9a;transform:scaleX(0.9230);transform-origin:0 0;">(12)</div><svg style="left:89.5px;top:605px" width="10" height="6" viewBox="0 0 10 6"><path d="M0.8 0.8L5 5 9.2 0.8" stroke="#151515" stroke-width="1.6" fill="none"/></svg><svg style="left:108px;top:600px" width="16" height="16" viewBox="0 0 16 16"><rect x="0" y="0.2" width="16" height="4.9" rx="2.4" fill="#c85000"/><rect x="1.3" y="1.2" width="2.6" height="2.9" rx="1.2" fill="#fff"/><rect x="0" y="5.5" width="16" height="4.9" rx="2.4" fill="#c85000"/><rect x="1.3" y="6.5" width="2.6" height="2.9" rx="1.2" fill="#fff"/><rect x="0" y="10.799999999999999" width="16" height="4.9" rx="2.4" fill="#c85000"/><rect x="1.3" y="11.799999999999999" width="2.6" height="2.9" rx="1.2" fill="#fff"/></svg><svg style="left:129px;top:600px" width="14" height="14" viewBox="0 0 14 14"><circle cx="7" cy="7" r="7" fill="#149414"/><path d="M3.3 6.6L6.4 9.7L11.4 4.6" stroke="#3a3a3a" stroke-width="2" fill="none"/></svg><div class="t" style="left:150.30px;top:601px;font-size:12px;line-height:12px;color:#ffffff;transform:scaleX(0.9337);transform-origin:0 0;">Microsoft SQL Database Server on MSSQL Server (192.168.11.103)</div><div class="t" style="left:492.90px;top:601px;font-size:12px;line-height:12px;color:#9a9a9a;transform:scaleX(0.9065);transform-origin:0 0;">(3)</div><svg style="left:129px;top:621px" width="14" height="14" viewBox="0 0 14 14"><circle cx="7" cy="7" r="7" fill="#149414"/><path d="M3.3 6.6L6.4 9.7L11.4 4.6" stroke="#3a3a3a" stroke-width="2" fill="none"/></svg><div class="t" style="left:150.30px;top:623px;font-size:12px;line-height:12px;color:#ffffff;transform:scaleX(0.9512);transform-origin:0 0;">DB sanity check: record count query on MSSQL Server (192.168.11.103)</div><div class="r" style="left:536px;top:618px;width:266px;height:20px;background:#2b2b2b;"></div><div class="r" style="left:537px;top:619px;width:264px;height:18px;background:#f0f0f0;"></div><div class="r" style="left:772px;top:619px;width:2px;height:18px;background:#949494;"></div><div class="r" style="left:774px;top:619px;width:1px;height:18px;background:#ffc0c0;"></div><div class="r" style="left:775px;top:619px;width:13px;height:18px;background:#ccffcc;"></div><div class="r" style="left:793px;top:619px;width:8px;height:18px;background:#ccffcc;"></div><div class="t" style="left:804.00px;top:623px;font-size:12px;line-height:12px;color:#ffffff;transform:scaleX(0.9550);transform-origin:0 0;">19820</div><svg style="left:129px;top:641px" width="14" height="14" viewBox="0 0 14 14"><circle cx="7" cy="7" r="7" fill="#149414"/><path d="M3.3 6.6L6.4 9.7L11.4 4.6" stroke="#3a3a3a" stroke-width="2" fill="none"/></svg><div class="t" style="left:150.30px;top:643px;font-size:12px;line-height:12px;color:#ffffff;transform:scaleX(0.9210);transform-origin:0 0;">TCP port on MSSQL Server (192.168.11.103)</div><div class="r" style="left:536px;top:638px;width:266px;height:20px;background:#2b2b2b;"></div><div class="r" style="left:537px;top:639px;width:264px;height:18px;background:#f0f0f0;"></div><div class="r" style="left:772px;top:639px;width:2px;height:18px;background:#949494;"></div><div class="r" style="left:774px;top:639px;width:14px;height:18px;background:#ccffcc;"></div><div class="r" style="left:793px;top:639px;width:8px;height:18px;background:#ccffcc;"></div><div class="t" style="left:804.00px;top:643px;font-size:12px;line-height:12px;color:#ffffff;transform:scaleX(0.9550);transform-origin:0 0;">30 msec</div><svg style="left:129px;top:661px" width="14" height="14" viewBox="0 0 14 14"><circle cx="7" cy="7" r="7" fill="#8c8c8c"/><rect x="5" y="5" width="4.2" height="4.2" fill="#fff"/></svg><div class="t" style="left:150.30px;top:663px;font-size:12px;line-height:12px;color:#ffffff;transform:scaleX(0.9389);transform-origin:0 0;">User connections on MSSQL Server (192.168.11.103)</div><div class="r" style="left:536px;top:658px;width:266px;height:20px;background:#2b2b2b;"></div><div class="r" style="left:537px;top:659px;width:264px;height:18px;background:#f0f0f0;"></div><div class="r" style="left:772px;top:659px;width:2px;height:18px;background:#949494;"></div><div class="r" style="left:774px;top:659px;width:14px;height:18px;background:#ffc0c0;"></div><div class="r" style="left:793px;top:659px;width:2px;height:18px;background:#ffc0c0;"></div><div class="r" style="left:795px;top:659px;width:6px;height:18px;background:#949494;"></div><div class="t" style="left:804.00px;top:663px;font-size:12px;line-height:12px;color:#ffffff;transform:scaleX(0.9550);transform-origin:0 0;">Stopped</div><svg style="left:109px;top:681px" width="14" height="14" viewBox="0 0 14 14"><circle cx="7" cy="7" r="7" fill="#149414"/><path d="M3.3 6.6L6.4 9.7L11.4 4.6" stroke="#3a3a3a" stroke-width="2" fill="none"/></svg><div class="t" style="left:130.30px;top:683px;font-size:12px;line-height:12px;color:#ffffff;transform:scaleX(0.9195);transform-origin:0 0;">MSSQL Database on MSSQL Server (192.168.11.103)</div><div class="r" style="left:536px;top:678px;width:266px;height:20px;background:#2b2b2b;"></div><div class="r" style="left:537px;top:679px;width:264px;height:18px;background:#f0f0f0;"></div><div class="r" style="left:770px;top:679px;width:1px;height:18px;background:#ffc0c0;"></div><div class="r" style="left:771px;top:679px;width:17px;height:18px;background:#ccffcc;"></div><div class="r" style="left:793px;top:679px;width:8px;height:18px;background:#ccffcc;"></div><div class="t" style="left:804.00px;top:683px;font-size:12px;line-height:12px;color:#ffffff;transform:scaleX(0.9550);transform-origin:0 0;">19820</div><svg style="left:109px;top:701px" width="14" height="14" viewBox="0 0 14 14"><circle cx="7" cy="7" r="7" fill="#149414"/><path d="M3.3 6.6L6.4 9.7L11.4 4.6" stroke="#3a3a3a" stroke-width="2" fill="none"/></svg><div class="t" style="left:130.30px;top:703px;font-size:12px;line-height:12px;color:#ffffff;transform:scaleX(0.9170);transform-origin:0 0;">PING on MSSQL Server (192.168.11.103)</div><div class="r" style="left:536px;top:698px;width:266px;height:20px;background:#2b2b2b;"></div><div class="r" style="left:537px;top:699px;width:264px;height:18px;background:#f0f0f0;"></div><div class="r" style="left:772px;top:699px;width:5px;height:18px;background:#949494;"></div><div class="r" style="left:777px;top:699px;width:11px;height:18px;background:#ccffcc;"></div><div class="r" style="left:792px;top:699px;width:2px;height:18px;background:#ffc0c0;"></div><div class="r" style="left:794px;top:699px;width:7px;height:18px;background:#ccffcc;"></div><div class="t" style="left:804.00px;top:703px;font-size:12px;line-height:12px;color:#ffffff;transform:scaleX(0.9550);transform-origin:0 0;">14 msec</div><svg style="left:109px;top:721px" width="14" height="14" viewBox="0 0 14 14"><circle cx="7" cy="7" r="7" fill="#149414"/><path d="M3.3 6.6L6.4 9.7L11.4 4.6" stroke="#3a3a3a" stroke-width="2" fill="none"/></svg><div class="t" style="left:130.30px;top:723px;font-size:12px;line-height:12px;color:#ffffff;transform:scaleX(0.9206);transform-origin:0 0;">SNMP CPU on MSSQL Server (192.168.11.103)</div><div class="r" style="left:536px;top:718px;width:266px;height:20px;background:#2b2b2b;"></div><div class="r" style="left:537px;top:719px;width:264px;height:18px;background:#f0f0f0;"></div><div class="r" style="left:777px;top:719px;width:11px;height:18px;background:#ccffcc;"></div><div class="r" style="left:793px;top:719px;width:8px;height:18px;background:#ccffcc;"></div><div class="t" style="left:804.00px;top:723px;font-size:12px;line-height:12px;color:#ffffff;transform:scaleX(0.9550);transform-origin:0 0;">9 %</div><svg style="left:109px;top:741px" width="14" height="14" viewBox="0 0 14 14"><circle cx="7" cy="7" r="7" fill="#149414"/><path d="M3.3 6.6L6.4 9.7L11.4 4.6" stroke="#3a3a3a" stroke-width="2" fill="none"/></svg><div class="t" style="left:130.30px;top:743px;font-size:12px;line-height:12px;color:#ffffff;transform:scaleX(0.9365);transform-origin:0 0;">SNMP Custom on MSSQL Server (192.168.11.103)</div><div class="r" style="left:536px;top:738px;width:266px;height:20px;background:#2b2b2b;"></div><div class="r" style="left:537px;top:739px;width:264px;height:18px;background:#f0f0f0;"></div><div class="r" style="left:777px;top:739px;width:11px;height:18px;background:#ccffcc;"></div><div class="r" style="left:793px;top:739px;width:8px;height:18px;background:#ccffcc;"></div><div class="t" style="left:804.00px;top:743px;font-size:12px;line-height:12px;color:#ffffff;transform:scaleX(0.8979);transform-origin:0 0;">20:21:53:07.42</div><svg style="left:109px;top:761px" width="14" height="14" viewBox="0 0 14 14"><circle cx="7" cy="7" r="7" fill="#149414"/><path d="M3.3 6.6L6.4 9.7L11.4 4.6" stroke="#3a3a3a" stroke-width="2" fill="none"/></svg><div class="t" style="left:130.30px;top:763px;font-size:12px;line-height:12px;color:#ffffff;transform:scaleX(0.9267);transform-origin:0 0;">SNMP Disk space on MSSQL Server (192.168.11.103)</div><div class="r" style="left:536px;top:758px;width:266px;height:20px;background:#2b2b2b;"></div><div class="r" style="left:537px;top:759px;width:264px;height:18px;background:#f0f0f0;"></div><div class="r" style="left:777px;top:759px;width:1px;height:18px;background:#ffc0c0;"></div><div class="r" style="left:778px;top:759px;width:10px;height:18px;background:#ccffcc;"></div><div class="r" style="left:793px;top:759px;width:8px;height:18px;background:#ccffcc;"></div><div class="t" style="left:804.00px;top:763px;font-size:12px;line-height:12px;color:#ffffff;transform:scaleX(0.9550);transform-origin:0 0;">8955 MB</div><svg style="left:109px;top:781px" width="14" height="14" viewBox="0 0 14 14"><circle cx="7" cy="7" r="7" fill="#149414"/><path d="M3.3 6.6L6.4 9.7L11.4 4.6" stroke="#3a3a3a" stroke-width="2" fill="none"/></svg><div class="t" style="left:130.30px;top:783px;font-size:12px;line-height:12px;color:#ffffff;transform:scaleX(0.9399);transform-origin:0 0;">SNMP Memory on MSSQL Server (192.168.11.103)</div><div class="r" style="left:536px;top:778px;width:266px;height:20px;background:#2b2b2b;"></div><div class="r" style="left:537px;top:779px;width:264px;height:18px;background:#f0f0f0;"></div><div class="r" style="left:777px;top:779px;width:11px;height:18px;background:#ccffcc;"></div><div class="r" style="left:793px;top:779px;width:8px;height:18px;background:#ccffcc;"></div><div class="t" style="left:804.00px;top:783px;font-size:12px;line-height:12px;color:#ffffff;transform:scaleX(0.9550);transform-origin:0 0;">52 %</div><svg style="left:109px;top:801px" width="14" height="14" viewBox="0 0 14 14"><circle cx="7" cy="7" r="7" fill="#149414"/><path d="M3.3 6.6L6.4 9.7L11.4 4.6" stroke="#3a3a3a" stroke-width="2" fill="none"/></svg><div class="t" style="left:130.30px;top:803px;font-size:12px;line-height:12px;color:#ffffff;transform:scaleX(0.9228);transform-origin:0 0;">SNMP Process on MSSQL Server (192.168.11.103)</div><div class="r" style="left:536px;top:798px;width:266px;height:20px;background:#2b2b2b;"></div><div class="r" style="left:537px;top:799px;width:264px;height:18px;background:#f0f0f0;"></div><div class="r" style="left:777px;top:799px;width:11px;height:18px;background:#ccffcc;"></div><div class="r" style="left:793px;top:799px;width:8px;height:18px;background:#ccffcc;"></div><div class="t" style="left:804.00px;top:803px;font-size:12px;line-height:12px;color:#ffffff;transform:scaleX(0.9550);transform-origin:0 0;">60</div><svg style="left:109px;top:821px" width="14" height="14" viewBox="0 0 14 14"><circle cx="7" cy="7" r="7" fill="#149414"/><path d="M3.3 6.6L6.4 9.7L11.4 4.6" stroke="#3a3a3a" stroke-width="2" fill="none"/></svg><div class="t" style="left:130.30px;top:823px;font-size:12px;line-height:12px;color:#ffffff;transform:scaleX(0.9293);transform-origin:0 0;">SNMP Traffic Speed on MSSQL Server (192.168.11.103)</div><div class="r" style="left:536px;top:818px;width:266px;height:20px;background:#2b2b2b;"></div><div class="r" style="left:537px;top:819px;width:264px;height:18px;background:#f0f0f0;"></div><div class="r" style="left:777px;top:819px;width:11px;height:18px;background:#ccffcc;"></div><div class="r" style="left:793px;top:819px;width:8px;height:18px;background:#ccffcc;"></div><div class="t" style="left:804.00px;top:823px;font-size:12px;line-height:12px;color:#ffffff;transform:scaleX(0.9550);transform-origin:0 0;">0 %</div><svg style="left:109px;top:841px" width="14" height="14" viewBox="0 0 14 14"><circle cx="7" cy="7" r="7" fill="#149414"/><path d="M3.3 6.6L6.4 9.7L11.4 4.6" stroke="#3a3a3a" stroke-width="2" fill="none"/></svg><div class="t" style="left:130.30px;top:843px;font-size:12px;line-height:12px;color:#ffffff;transform:scaleX(0.9401);transform-origin:0 0;">SNMP Traffic Volume on MSSQL Server (192.168.11.103)</div><div class="r" style="left:536px;top:838px;width:266px;height:20px;background:#2b2b2b;"></div><div class="r" style="left:537px;top:839px;width:264px;height:18px;background:#f0f0f0;"></div><div class="r" style="left:777px;top:839px;width:11px;height:18px;background:#ccffcc;"></div><div class="r" style="left:793px;top:839px;width:8px;height:18px;background:#ccffcc;"></div><div class="t" style="left:804.00px;top:843px;font-size:12px;line-height:12px;color:#ffffff;transform:scaleX(0.9550);transform-origin:0 0;">38 MB</div><svg style="left:69.5px;top:865px" width="10" height="6" viewBox="0 0 10 6"><path d="M0.8 0.8L5 5 9.2 0.8" stroke="#151515" stroke-width="1.6" fill="none"/></svg><svg style="left:88.8px;top:860px" width="15" height="15" viewBox="0 0 15 15"><path d="M0 2.8L7.2 0.2 14.3 2.2 7 4.4z" fill="#e09018"/><path d="M0 2.8L7 4.4V14.9L0 13.2z" fill="#d98a12"/><path d="M7 4.4L14.3 2.2V13L7 14.9z" fill="#c98010"/><path d="M0.3 5.3L6.8 6.6M0.3 7.8L6.8 9.1M0.3 10.3L6.8 11.6" stroke="#8a5a10" stroke-width="0.7"/><path d="M7 4.4V14.9" stroke="#6a4a10" stroke-width="0.6"/></svg><svg style="left:109px;top:860px" width="14" height="14" viewBox="0 0 14 14"><circle cx="7" cy="7" r="7" fill="#149414"/><path d="M3.3 6.6L6.4 9.7L11.4 4.6" stroke="#3a3a3a" stroke-width="2" fill="none"/></svg><div class="t" style="left:130.30px;top:861px;font-size:12px;line-height:12px;color:#ffffff;transform:scaleX(0.9122);transform-origin:0 0;">MySQL Server (192.168.14.102)</div><div class="t" style="left:291.70px;top:861px;font-size:12px;line-height:12px;color:#9a9a9a;transform:scaleX(0.9230);transform-origin:0 0;">(13)</div><svg style="left:89.5px;top:885px" width="10" height="6" viewBox="0 0 10 6"><path d="M0.8 0.8L5 5 9.2 0.8" stroke="#151515" stroke-width="1.6" fill="none"/></svg><svg style="left:108px;top:880px" width="16" height="16" viewBox="0 0 16 16"><rect x="0" y="0.2" width="16" height="4.9" rx="2.4" fill="#c85000"/><rect x="1.3" y="1.2" width="2.6" height="2.9" rx="1.2" fill="#fff"/><rect x="0" y="5.5" width="16" height="4.9" rx="2.4" fill="#c85000"/><rect x="1.3" y="6.5" width="2.6" height="2.9" rx="1.2" fill="#fff"/><rect x="0" y="10.799999999999999" width="16" height="4.9" rx="2.4" fill="#c85000"/><rect x="1.3" y="11.799999999999999" width="2.6" height="2.9" rx="1.2" fill="#fff"/></svg><svg style="left:129px;top:880px" width="14" height="14" viewBox="0 0 14 14"><circle cx="7" cy="7" r="7" fill="#149414"/><path d="M3.3 6.6L6.4 9.7L11.4 4.6" stroke="#3a3a3a" stroke-width="2" fill="none"/></svg><div class="t" style="left:150.30px;top:881px;font-size:12px;line-height:12px;color:#ffffff;transform:scaleX(0.9313);transform-origin:0 0;">MySQL 5.[1-6].X Database Server on MySQL Server (192.168.14.102)</div><div class="t" style="left:502.80px;top:881px;font-size:12px;line-height:12px;color:#9a9a9a;transform:scaleX(0.9436);transform-origin:0 0;">(11)</div><svg style="left:129px;top:901px" width="14" height="14" viewBox="0 0 14 14"><circle cx="7" cy="7" r="7" fill="#149414"/><path d="M3.3 6.6L6.4 9.7L11.4 4.6" stroke="#3a3a3a" stroke-width="2" fill="none"/></svg><div class="t" style="left:150.30px;top:903px;font-size:12px;line-height:12px;color:#ffffff;transform:scaleX(0.9506);transform-origin:0 0;">Free memory in query cache, MB on MySQL Server (192.168.14.102)</div><div class="r" style="left:536px;top:898px;width:266px;height:20px;background:#2b2b2b;"></div><div class="r" style="left:537px;top:899px;width:264px;height:18px;background:#f0f0f0;"></div><div class="r" style="left:781px;top:899px;width:7px;height:18px;background:#ccffcc;"></div><div class="r" style="left:793px;top:899px;width:8px;height:18px;background:#ccffcc;"></div><div class="t" style="left:804.00px;top:903px;font-size:12px;line-height:12px;color:#ffffff;transform:scaleX(0.9550);transform-origin:0 0;">0</div><svg style="left:129px;top:921px" width="14" height="14" viewBox="0 0 14 14"><circle cx="7" cy="7" r="7" fill="#149414"/><path d="M3.3 6.6L6.4 9.7L11.4 4.6" stroke="#3a3a3a" stroke-width="2" fill="none"/></svg><div class="t" style="left:150.30px;top:923px;font-size:12px;line-height:12px;color:#ffffff;transform:scaleX(0.9405);transform-origin:0 0;">Kilobytes received on MySQL Server (192.168.14.102)</div><div class="r" style="left:536px;top:918px;width:266px;height:20px;background:#2b2b2b;"></div><div class="r" style="left:537px;top:919px;width:264px;height:18px;background:#f0f0f0;"></div><div class="r" style="left:782px;top:919px;width:6px;height:18px;background:#ccffcc;"></div><div class="r" style="left:793px;top:919px;width:8px;height:18px;background:#ccffcc;"></div><div class="t" style="left:804.00px;top:923px;font-size:12px;line-height:12px;color:#ffffff;transform:scaleX(0.9550);transform-origin:0 0;">225</div><svg style="left:129px;top:941px" width="14" height="14" viewBox="0 0 14 14"><circle cx="7" cy="7" r="7" fill="#149414"/><path d="M3.3 6.6L6.4 9.7L11.4 4.6" stroke="#3a3a3a" stroke-width="2" fill="none"/></svg><div class="t" style="left:150.30px;top:943px;font-size:12px;line-height:12px;color:#ffffff;transform:scaleX(0.9369);transform-origin:0 0;">Kilobytes sent on MySQL Server (192.168.14.102)</div><div class="r" style="left:536px;top:938px;width:266px;height:20px;background:#2b2b2b;"></div><div class="r" style="left:537px;top:939px;width:264px;height:18px;background:#f0f0f0;"></div><div class="r" style="left:782px;top:939px;width:6px;height:18px;background:#ccffcc;"></div><div class="r" style="left:793px;top:939px;width:8px;height:18px;background:#ccffcc;"></div><div class="t" style="left:804.00px;top:943px;font-size:12px;line-height:12px;color:#ffffff;transform:scaleX(0.9550);transform-origin:0 0;">230</div><svg style="left:129px;top:961px" width="14" height="14" viewBox="0 0 14 14"><circle cx="7" cy="7" r="7" fill="#8c8c8c"/><rect x="5" y="5" width="4.2" height="4.2" fill="#fff"/></svg><div class="t" style="left:150.30px;top:963px;font-size:12px;line-height:12px;color:#ffffff;transform:scaleX(0.9549);transform-origin:0 0;">MySQL daemon process count over SNMP on MySQL Server (192.168.1...</div><div class="r" style="left:536px;top:958px;width:266px;height:20px;background:#2b2b2b;"></div><div class="r" style="left:537px;top:959px;width:264px;height:18px;background:#f0f0f0;"></div><div class="r" style="left:783px;top:959px;width:5px;height:18px;background:#ffc0c0;"></div><div class="r" style="left:793px;top:959px;width:2px;height:18px;background:#ffc0c0;"></div><div class="r" style="left:795px;top:959px;width:6px;height:18px;background:#949494;"></div><div class="t" style="left:804.00px;top:963px;font-size:12px;line-height:12px;color:#ffffff;transform:scaleX(0.9550);transform-origin:0 0;">Stopped</div><svg style="left:129px;top:981px" width="14" height="14" viewBox="0 0 14 14"><circle cx="7" cy="7" r="7" fill="#149414"/><path d="M3.3 6.6L6.4 9.7L11.4 4.6" stroke="#3a3a3a" stroke-width="2" fill="none"/></svg><div class="t" style="left:150.30px;top:983px;font-size:12px;line-height:12px;color:#ffffff;transform:scaleX(0.9299);transform-origin:0 0;">MySQL TCP port on MySQL Server (192.168.14.102)</div><div class="r" style="left:536px;top:978px;width:266px;height:20px;background:#2b2b2b;"></div><div class="r" style="left:537px;top:979px;width:264px;height:18px;background:#f0f0f0;"></div><div class="r" style="left:781px;top:979px;width:7px;height:18px;background:#ccffcc;"></div><div class="r" style="left:793px;top:979px;width:8px;height:18px;background:#ccffcc;"></div><div class="t" style="left:804.00px;top:983px;font-size:12px;line-height:12px;color:#ffffff;transform:scaleX(0.9550);transform-origin:0 0;">29 msec</div><svg style="left:129px;top:1001px" width="14" height="14" viewBox="0 0 14 14"><circle cx="7" cy="7" r="7" fill="#149414"/><path d="M3.3 6.6L6.4 9.7L11.4 4.6" stroke="#3a3a3a" stroke-width="2" fill="none"/></svg><div class="t" style="left:150.30px;top:1003px;font-size:12px;line-height:12px;color:#ffffff;transform:scaleX(0.9506);transform-origin:0 0;">Opened connections on MySQL Server (192.168.14.102)</div><div class="r" style="left:536px;top:998px;width:266px;height:20px;background:#2b2b2b;"></div><div class="r" style="left:537px;top:999px;width:264px;height:18px;background:#f0f0f0;"></div><div class="r" style="left:782px;top:999px;width:6px;height:18px;background:#ccffcc;"></div><div class="r" style="left:793px;top:999px;width:8px;height:18px;background:#ccffcc;"></div><div class="t" style="left:804.00px;top:1003px;font-size:12px;line-height:12px;color:#ffffff;transform:scaleX(0.9550);transform-origin:0 0;">1</div><div class="r" style="left:465px;top:463px;width:221px;height:19px;background:#f7f7f7;border:1px solid #d0d0d0;border-radius:3px"></div><div class="t" style="left:468.10px;top:467px;font-size:12px;line-height:12px;color:#151515;transform:scaleX(0.9797);transform-origin:0 0;">WMI CPU on Monitoring Host (127.0.0.1)</div><svg style="left:463px;top:447px" width="13" height="20" viewBox="0 0 13 20"><path d="M0.5 0.5V16.5L4.3 12.9L6.9 18.9L9.4 17.8L6.9 12H12.2z" fill="#fff" stroke="#000" stroke-width="1"/></svg><div class="r" style="left:914px;top:67px;width:842px;height:44px;background:#3c3c3c;"></div><div class="r" style="left:914px;top:111px;width:842px;height:34px;background:#272727;"></div><div class="r" style="left:914px;top:145px;width:842px;height:36px;background:#3c3c3c;"></div><div class="r" style="left:914px;top:181px;width:840px;height:1px;background:#c4c4c4;"></div><div class="r" style="left:914px;top:182px;width:842px;height:648px;background:#3c3c3c;"></div><svg style="left:920px;top:82px" width="18" height="18" viewBox="0 0 18 18"><rect x="3" y="3" width="12" height="12" fill="#00b8f0"/><rect x="4.5" y="4.5" width="9" height="9" fill="none" stroke="#1894c4" stroke-width="1"/><rect x="4" y="1" width="1" height="1" fill="#00b8f0"/><rect x="3" y="16" width="1" height="1" fill="#00b8f0"/><rect x="1" y="3" width="1" height="1" fill="#00b8f0"/><rect x="16" y="4" width="1" height="1" fill="#00b8f0"/><rect x="6" y="1" width="1" height="1" fill="#00b8f0"/><rect x="5" y="16" width="1" height="1" fill="#00b8f0"/><rect x="1" y="5" width="1" height="1" fill="#00b8f0"/><rect x="16" y="6" width="1" height="1" fill="#00b8f0"/><rect x="8" y="1" width="1" height="1" fill="#00b8f0"/><rect x="7" y="16" width="1" height="1" fill="#00b8f0"/><rect x="1" y="7" width="1" height="1" fill="#00b8f0"/><rect x="16" y="8" width="1" height="1" fill="#00b8f0"/><rect x="10" y="1" width="1" height="1" fill="#00b8f0"/><rect x="9" y="16" width="1" height="1" fill="#00b8f0"/><rect x="1" y="9" width="1" height="1" fill="#00b8f0"/><rect x="16" y="10" width="1" height="1" fill="#00b8f0"/><rect x="12" y="1" width="1" height="1" fill="#00b8f0"/><rect x="11" y="16" width="1" height="1" fill="#00b8f0"/><rect x="1" y="11" width="1" height="1" fill="#00b8f0"/><rect x="16" y="12" width="1" height="1" fill="#00b8f0"/><rect x="14" y="1" width="1" height="1" fill="#00b8f0"/><rect x="13" y="16" width="1" height="1" fill="#00b8f0"/><rect x="1" y="13" width="1" height="1" fill="#00b8f0"/><rect x="16" y="14" width="1" height="1" fill="#00b8f0"/></svg><svg style="left:942px;top:84px" width="14" height="14" viewBox="0 0 14 14"><circle cx="7" cy="7" r="7" fill="#149414"/><path d="M3.3 6.6L6.4 9.7L11.4 4.6" stroke="#3a3a3a" stroke-width="2" fill="none"/></svg><div class="t" style="left:961.20px;top:84px;font-size:15px;line-height:15px;color:#ffffff;">WMI CPU on Monitoring Host (127.0.0.1)</div><div class="r" style="left:919px;top:119px;width:143px;height:26px;background:#292929;border:1px solid #5c5c5c;border-bottom:none;border-radius:3px 3px 0 0"></div><div class="r" style="left:914px;top:144px;width:5px;height:1px;background:#5c5c5c;"></div><div class="r" style="left:1062px;top:144px;width:694px;height:1px;background:#5c5c5c;"></div><svg style="left:963px;top:128px" width="11" height="11" viewBox="0 0 11 11"><path d="M0.6 0v10.4H11" stroke="#000" stroke-width="1.2" fill="none"/><rect x="2.5" y="4" width="1.6" height="5.6" fill="#000"/><rect x="5" y="2" width="1.6" height="7.6" fill="#000"/><rect x="7.5" y="5.2" width="1.6" height="4.4" fill="#000"/></svg><div class="t" style="left:980.00px;top:128px;font-size:12px;line-height:12px;color:#ffffff;font-weight:bold;transform:scaleX(1.0343);transform-origin:0 0;">Report</div><div class="r" style="left:1064.5px;top:122px;width:126.1px;height:23px;background:#282828;border:1px solid #4e4e4e;border-bottom:none;border-radius:3px 3px 0 0"></div><div class="r" style="left:1193.4px;top:122px;width:126.3px;height:23px;background:#282828;border:1px solid #4e4e4e;border-bottom:none;border-radius:3px 3px 0 0"></div><div class="r" style="left:1322.3px;top:122px;width:126.3px;height:23px;background:#282828;border:1px solid #4e4e4e;border-bottom:none;border-radius:3px 3px 0 0"></div><div class="t" style="left:1083.30px;top:128px;font-size:12px;line-height:12px;color:#c8c8c8;transform:scaleX(0.9839);transform-origin:0 0;">Main parameters</div><div class="t" style="left:1214.30px;top:128px;font-size:12px;line-height:12px;color:#c8c8c8;transform:scaleX(0.9919);transform-origin:0 0;">State conditions</div><div class="t" style="left:1364.00px;top:128px;font-size:12px;line-height:12px;color:#c8c8c8;transform:scaleX(1.0323);transform-origin:0 0;">Alerting</div><svg style="left:926px;top:157px" width="14" height="16" viewBox="0 0 14 16"><path d="M0 8L7.8 0V4.6H13V11.6H7.8V16z" fill="#1a9fd2"/></svg><div class="t" style="left:944.40px;top:160px;font-size:11.5px;line-height:11.5px;color:#1a9fd2;transform:scaleX(0.9031);transform-origin:0 0;">Back</div><svg style="left:987px;top:157px" width="14" height="16" viewBox="0 0 14 16"><path d="M13 8L5.2 0V4.6H0V11.6H5.2V16z" fill="#8a8a8a"/></svg><div class="t" style="left:1004.40px;top:160px;font-size:11.5px;line-height:11.5px;color:#b0b0b0;transform:scaleX(0.9766);transform-origin:0 0;">Forward</div><svg style="left:1063px;top:157px" width="14" height="15" viewBox="0 0 14 15"><path d="M1.2 3.8H12.8V8.2M3.8 1.2L1.2 3.8 3.8 6.4M12.8 11.2H1.2V6.8M10.2 8.6L12.8 11.2 10.2 13.8" stroke="#1a9fd2" stroke-width="1.7" fill="none"/></svg><div class="t" style="left:1080.30px;top:160px;font-size:11.5px;line-height:11.5px;color:#1a9fd2;transform:scaleX(0.9260);transform-origin:0 0;">Refresh</div><div class="r" style="left:1140px;top:155px;width:1px;height:20px;background:#262626;"></div><div class="t" style="left:1159.00px;top:160px;font-size:11.5px;line-height:11.5px;color:#1a9fd2;transform:scaleX(0.9596);transform-origin:0 0;">Print</div><div class="t" style="left:1207.80px;top:160px;font-size:11.5px;line-height:11.5px;color:#1a9fd2;transform:scaleX(0.9813);transform-origin:0 0;">Open in browser</div><div class="r" style="left:1737px;top:182px;width:17px;height:647px;background:#474747;"></div><div class="r" style="left:1737px;top:183px;width:17px;height:17px;background:#2b2b2b;"></div><svg style="left:1742px;top:188px" width="9" height="5" viewBox="0 0 9 5"><path d="M0 5h9L4.5 0z" fill="#14b4e8"/></svg><div class="r" style="left:1737px;top:200px;width:17px;height:415px;background:#4d4a44;"></div><div class="r" style="left:1737px;top:811px;width:17px;height:17px;background:#2b2b2b;"></div><svg style="left:1742px;top:818px" width="9" height="5" viewBox="0 0 9 5"><path d="M0 0h9L4.5 5z" fill="#14b4e8"/></svg><div class="t" style="left:922.00px;top:194px;font-size:16px;line-height:16px;color:#0e9fd4;font-weight:bold;transform:scaleX(1.0803);transform-origin:0 0;">Summary report for WMI CPU on Monitoring Host (127.0.0.1)</div><div class="t u" style="left:1655.20px;top:194px;font-size:12px;line-height:12px;color:#1a9fd2;transform:scaleX(1.0825);transform-origin:0 0;">edit header</div><svg style="left:0;top:0" width="1759" height="1025" viewBox="0 0 1759 1025"><rect x="960" y="222" width="13.299999999999955" height="206.3" fill="#f0f0f0"/><rect x="973.3" y="222" width="12.700000000000045" height="206.3" fill="#ccffcc"/><rect x="986" y="222" width="3" height="206.3" fill="#f0f0f0"/><rect x="989" y="222" width="225.5" height="206.3" fill="#ccffcc"/><rect x="1214.5" y="222" width="2.0" height="206.3" fill="#e8f8e8"/><rect x="1216.5" y="222" width="84.5" height="206.3" fill="#ccffcc"/><rect x="1301" y="222" width="6.5" height="206.3" fill="#f0f0f0"/><rect x="1307.5" y="222" width="13.5" height="206.3" fill="#ccffcc"/><line x1="960" y1="422.4" x2="1321" y2="422.4" stroke="#aab4aa" stroke-width="1" stroke-dasharray="2 1"/><line x1="960" y1="416.6" x2="1321" y2="416.6" stroke="#aab4aa" stroke-width="1" stroke-dasharray="2 1"/><line x1="960" y1="410.7" x2="1321" y2="410.7" stroke="#aab4aa" stroke-width="1" stroke-dasharray="2 1"/><line x1="960" y1="404.8" x2="1321" y2="404.8" stroke="#aab4aa" stroke-width="1" stroke-dasharray="2 1"/><line x1="960" y1="399.0" x2="1321" y2="399.0" stroke="#f4fff4" stroke-width="1" stroke-dasharray="2 1"/><line x1="960" y1="393.1" x2="1321" y2="393.1" stroke="#aab4aa" stroke-width="1" stroke-dasharray="2 1"/><line x1="960" y1="387.2" x2="1321" y2="387.2" stroke="#aab4aa" stroke-width="1" stroke-dasharray="2 1"/><line x1="960" y1="381.4" x2="1321" y2="381.4" stroke="#aab4aa" stroke-width="1" stroke-dasharray="2 1"/><line x1="960" y1="375.5" x2="1321" y2="375.5" stroke="#aab4aa" stroke-width="1" stroke-dasharray="2 1"/><line x1="960" y1="369.6" x2="1321" y2="369.6" stroke="#f4fff4" stroke-width="1" stroke-dasharray="2 1"/><line x1="960" y1="363.8" x2="1321" y2="363.8" stroke="#aab4aa" stroke-width="1" stroke-dasharray="2 1"/><line x1="960" y1="357.9" x2="1321" y2="357.9" stroke="#aab4aa" stroke-width="1" stroke-dasharray="2 1"/><line x1="960" y1="352.0" x2="1321" y2="352.0" stroke="#aab4aa" stroke-width="1" stroke-dasharray="2 1"/><line x1="960" y1="346.2" x2="1321" y2="346.2" stroke="#aab4aa" stroke-width="1" stroke-dasharray="2 1"/><line x1="960" y1="340.3" x2="1321" y2="340.3" stroke="#f4fff4" stroke-width="1" stroke-dasharray="2 1"/><line x1="960" y1="334.4" x2="1321" y2="334.4" stroke="#aab4aa" stroke-width="1" stroke-dasharray="2 1"/><line x1="960" y1="328.6" x2="1321" y2="328.6" stroke="#aab4aa" stroke-width="1" stroke-dasharray="2 1"/><line x1="960" y1="322.7" x2="1321" y2="322.7" stroke="#aab4aa" stroke-width="1" stroke-dasharray="2 1"/><line x1="960" y1="316.8" x2="1321" y2="316.8" stroke="#aab4aa" stroke-width="1" stroke-dasharray="2 1"/><line x1="960" y1="311.0" x2="1321" y2="311.0" stroke="#f4fff4" stroke-width="1" stroke-dasharray="2 1"/><line x1="960" y1="305.1" x2="1321" y2="305.1" stroke="#aab4aa" stroke-width="1" stroke-dasharray="2 1"/><line x1="960" y1="299.2" x2="1321" y2="299.2" stroke="#aab4aa" stroke-width="1" stroke-dasharray="2 1"/><line x1="960" y1="293.4" x2="1321" y2="293.4" stroke="#aab4aa" stroke-width="1" stroke-dasharray="2 1"/><line x1="960" y1="287.5" x2="1321" y2="287.5" stroke="#aab4aa" stroke-width="1" stroke-dasharray="2 1"/><line x1="960" y1="281.7" x2="1321" y2="281.7" stroke="#f4fff4" stroke-width="1" stroke-dasharray="2 1"/><line x1="960" y1="275.8" x2="1321" y2="275.8" stroke="#aab4aa" stroke-width="1" stroke-dasharray="2 1"/><line x1="960" y1="269.9" x2="1321" y2="269.9" stroke="#aab4aa" stroke-width="1" stroke-dasharray="2 1"/><line x1="960" y1="264.1" x2="1321" y2="264.1" stroke="#aab4aa" stroke-width="1" stroke-dasharray="2 1"/><line x1="960" y1="258.2" x2="1321" y2="258.2" stroke="#aab4aa" stroke-width="1" stroke-dasharray="2 1"/><line x1="960" y1="252.3" x2="1321" y2="252.3" stroke="#f4fff4" stroke-width="1" stroke-dasharray="2 1"/><line x1="960" y1="246.5" x2="1321" y2="246.5" stroke="#aab4aa" stroke-width="1" stroke-dasharray="2 1"/><line x1="960" y1="240.6" x2="1321" y2="240.6" stroke="#aab4aa" stroke-width="1" stroke-dasharray="2 1"/><line x1="960" y1="234.7" x2="1321" y2="234.7" stroke="#aab4aa" stroke-width="1" stroke-dasharray="2 1"/><line x1="960" y1="228.9" x2="1321" y2="228.9" stroke="#aab4aa" stroke-width="1" stroke-dasharray="2 1"/><line x1="960" y1="222.5" x2="1321" y2="222.5" stroke="#f4fff4" stroke-width="1" stroke-dasharray="2 1"/><line x1="960" y1="428.3" x2="1321" y2="428.3" stroke="#fafffa" stroke-width="1"/><line x1="979.5" y1="222" x2="979.5" y2="428.3" stroke="#a0a8a0" stroke-width="1" stroke-dasharray="1.5 4.5"/><line x1="1009.5" y1="222" x2="1009.5" y2="428.3" stroke="#f4fff4" stroke-width="1" stroke-dasharray="1.5 4.5"/><line x1="1039.5" y1="222" x2="1039.5" y2="428.3" stroke="#a0a8a0" stroke-width="1" stroke-dasharray="1.5 4.5"/><line x1="1069.5" y1="222" x2="1069.5" y2="428.3" stroke="#f4fff4" stroke-width="1" stroke-dasharray="1.5 4.5"/><line x1="1099.5" y1="222" x2="1099.5" y2="428.3" stroke="#a0a8a0" stroke-width="1" stroke-dasharray="1.5 4.5"/><line x1="1129.5" y1="222" x2="1129.5" y2="428.3" stroke="#f4fff4" stroke-width="1" stroke-dasharray="1.5 4.5"/><line x1="1159.5" y1="222" x2="1159.5" y2="428.3" stroke="#a0a8a0" stroke-width="1" stroke-dasharray="1.5 4.5"/><line x1="1189.5" y1="222" x2="1189.5" y2="428.3" stroke="#f4fff4" stroke-width="1" stroke-dasharray="1.5 4.5"/><line x1="1219.5" y1="222" x2="1219.5" y2="428.3" stroke="#a0a8a0" stroke-width="1" stroke-dasharray="1.5 4.5"/><line x1="1249.5" y1="222" x2="1249.5" y2="428.3" stroke="#f4fff4" stroke-width="1" stroke-dasharray="1.5 4.5"/><line x1="1279.5" y1="222" x2="1279.5" y2="428.3" stroke="#a0a8a0" stroke-width="1" stroke-dasharray="1.5 4.5"/><line x1="1309.5" y1="222" x2="1309.5" y2="428.3" stroke="#f4fff4" stroke-width="1" stroke-dasharray="1.5 4.5"/><rect x="958" y="221.5" width="2" height="207.5" fill="#9a9a9a"/><rect x="959.8" y="430" width="361" height="1.2" fill="#c4c4c4"/><rect x="954" y="427.8" width="4" height="1" fill="#d0d0d0"/><rect x="956" y="421.9" width="2" height="1" fill="#b0b0b0"/><rect x="956" y="416.1" width="2" height="1" fill="#b0b0b0"/><rect x="956" y="410.2" width="2" height="1" fill="#b0b0b0"/><rect x="956" y="404.3" width="2" height="1" fill="#b0b0b0"/><rect x="954" y="398.5" width="4" height="1" fill="#d0d0d0"/><rect x="956" y="392.6" width="2" height="1" fill="#b0b0b0"/><rect x="956" y="386.7" width="2" height="1" fill="#b0b0b0"/><rect x="956" y="380.9" width="2" height="1" fill="#b0b0b0"/><rect x="956" y="375.0" width="2" height="1" fill="#b0b0b0"/><rect x="954" y="369.1" width="4" height="1" fill="#d0d0d0"/><rect x="956" y="363.3" width="2" height="1" fill="#b0b0b0"/><rect x="956" y="357.4" width="2" height="1" fill="#b0b0b0"/><rect x="956" y="351.5" width="2" height="1" fill="#b0b0b0"/><rect x="956" y="345.7" width="2" height="1" fill="#b0b0b0"/><rect x="954" y="339.8" width="4" height="1" fill="#d0d0d0"/><rect x="956" y="333.9" width="2" height="1" fill="#b0b0b0"/><rect x="956" y="328.1" width="2" height="1" fill="#b0b0b0"/><rect x="956" y="322.2" width="2" height="1" fill="#b0b0b0"/><rect x="956" y="316.3" width="2" height="1" fill="#b0b0b0"/><rect x="954" y="310.5" width="4" height="1" fill="#d0d0d0"/><rect x="956" y="304.6" width="2" height="1" fill="#b0b0b0"/><rect x="956" y="298.7" width="2" height="1" fill="#b0b0b0"/><rect x="956" y="292.9" width="2" height="1" fill="#b0b0b0"/><rect x="956" y="287.0" width="2" height="1" fill="#b0b0b0"/><rect x="954" y="281.2" width="4" height="1" fill="#d0d0d0"/><rect x="956" y="275.3" width="2" height="1" fill="#b0b0b0"/><rect x="956" y="269.4" width="2" height="1" fill="#b0b0b0"/><rect x="956" y="263.6" width="2" height="1" fill="#b0b0b0"/><rect x="956" y="257.7" width="2" height="1" fill="#b0b0b0"/><rect x="954" y="251.8" width="4" height="1" fill="#d0d0d0"/><rect x="956" y="246.0" width="2" height="1" fill="#b0b0b0"/><rect x="956" y="240.1" width="2" height="1" fill="#b0b0b0"/><rect x="956" y="234.2" width="2" height="1" fill="#b0b0b0"/><rect x="956" y="228.4" width="2" height="1" fill="#b0b0b0"/><rect x="954" y="222.5" width="4" height="1" fill="#d0d0d0"/><rect x="979.0" y="431" width="1" height="3" fill="#b0b0b0"/><rect x="1009.0" y="431" width="1" height="4" fill="#c8c8c8"/><rect x="1039.0" y="431" width="1" height="3" fill="#b0b0b0"/><rect x="1069.0" y="431" width="1" height="4" fill="#c8c8c8"/><rect x="1099.0" y="431" width="1" height="3" fill="#b0b0b0"/><rect x="1129.0" y="431" width="1" height="4" fill="#c8c8c8"/><rect x="1159.0" y="431" width="1" height="3" fill="#b0b0b0"/><rect x="1189.0" y="431" width="1" height="4" fill="#c8c8c8"/><rect x="1219.0" y="431" width="1" height="3" fill="#b0b0b0"/><rect x="1249.0" y="431" width="1" height="4" fill="#c8c8c8"/><rect x="1279.0" y="431" width="1" height="3" fill="#b0b0b0"/><rect x="1309.0" y="431" width="1" height="4" fill="#c8c8c8"/><polyline fill="none" stroke="#7a0000" stroke-width="2" stroke-linejoin="miter" stroke-miterlimit="3" points="970.7,428.3 973.6,428.3 974.0,363.8 974.9,427.4 976.6,416.6 979.1,418.9 981.6,428.3 983.7,381.4 985.8,381.4 985.9,428.3 989.2,428.3 989.3,319.2 991.6,404.8 994.1,404.8 996.2,399.3 999.0,410.7 1001.2,404.8 1004.0,386.9 1006.6,401.3 1008.7,399.0 1011.5,413.3 1014.3,402.2 1016.0,407.2 1018.9,386.9 1021.4,410.7 1023.8,411.0 1026.7,416.3 1029.2,399.0 1031.3,400.7 1034.0,377.9 1036.6,410.7 1039.4,410.7 1041.5,407.8 1044.4,395.7 1046.5,397.8 1048.9,374.9 1051.5,418.9 1053.9,410.7 1056.5,393.7 1058.9,407.2 1061.4,346.8 1066.4,404.5 1068.9,404.5 1071.4,395.7 1073.8,393.7 1076.3,401.3 1078.9,366.4 1081.3,410.7 1083.7,413.3 1086.2,413.6 1088.8,395.7 1091.2,410.7 1094.0,354.4 1096.6,404.8 1099.0,413.6 1101.5,399.0 1103.9,399.0 1106.3,413.3 1108.9,310.1 1111.4,410.7 1113.8,402.2 1116.4,410.7 1118.8,395.7 1121.3,413.3 1124.0,319.2 1126.6,410.7 1129.0,404.5 1131.5,407.8 1133.9,410.7 1136.5,404.5 1139.0,339.4 1141.5,410.7 1143.9,410.7 1146.5,407.2 1148.9,404.2 1151.4,393.7 1153.9,310.1 1156.4,416.3 1159.0,413.3 1161.4,390.8 1163.9,410.7 1166.3,395.7 1168.9,327.7 1171.3,375.2 1174.1,404.5 1176.5,384.9 1179.0,407.5 1181.2,407.5 1184.0,333.9 1186.6,356.7 1189.0,402.2 1191.5,410.7 1193.9,410.7 1196.3,407.5 1198.9,345.9 1201.4,361.1 1203.8,395.7 1206.4,398.7 1208.8,387.5 1211.3,392.2 1213.3,245.6"/><polyline fill="none" stroke="#7a0000" stroke-width="2" stroke-linejoin="miter" stroke-miterlimit="3" points="1217.0,342.1 1219.4,378.4 1221.9,404.8 1224.2,409.8 1226.5,404.8 1228.8,409.8 1231.4,401.6 1233.9,416.0 1236.5,402.2 1239.0,410.7 1241.4,410.7 1243.9,413.3 1246.4,387.5 1248.9,398.7 1251.4,390.8 1253.9,410.7 1256.3,407.8 1258.9,407.5 1261.3,390.8 1264.1,422.7 1266.5,361.1 1269.0,378.1 1271.6,404.8 1274.0,413.3 1276.6,410.7 1279.0,404.5 1281.5,404.5 1283.9,413.3 1286.3,395.7 1288.9,402.2 1291.4,410.7 1293.8,416.6 1296.4,416.6 1298.8,387.5 1300.5,387.5 1300.5,428.3 1307.6,428.3 1309.0,384.3 1311.8,416.3 1314.4,407.5 1316.8,398.7 1319.3,413.3 1321.4,414.2"/><polygon fill="#7a0000" points="1212.7,245.6 1215,245.0 1217.3,246.5 1217.4,340.3 1216.9,428.9 1214,428.9 1212.4,393.1"/></svg><div class="t" style="left:946.20px;top:423px;font-size:11px;line-height:11px;color:#e8e8e8;transform:scaleX(0.8653);transform-origin:0 0;">0</div><div class="t" style="left:940.90px;top:394px;font-size:11px;line-height:11px;color:#e8e8e8;transform:scaleX(0.8653);transform-origin:0 0;">10</div><div class="t" style="left:940.90px;top:365px;font-size:11px;line-height:11px;color:#e8e8e8;transform:scaleX(0.8653);transform-origin:0 0;">20</div><div class="t" style="left:940.90px;top:335px;font-size:11px;line-height:11px;color:#e8e8e8;transform:scaleX(0.8653);transform-origin:0 0;">30</div><div class="t" style="left:940.90px;top:306px;font-size:11px;line-height:11px;color:#e8e8e8;transform:scaleX(0.8653);transform-origin:0 0;">40</div><div class="t" style="left:940.90px;top:277px;font-size:11px;line-height:11px;color:#e8e8e8;transform:scaleX(0.8653);transform-origin:0 0;">50</div><div class="t" style="left:940.90px;top:247px;font-size:11px;line-height:11px;color:#e8e8e8;transform:scaleX(0.8653);transform-origin:0 0;">60</div><div class="t" style="left:940.90px;top:218px;font-size:11px;line-height:11px;color:#e8e8e8;transform:scaleX(0.8653);transform-origin:0 0;">70</div><div class="t" style="left:996.60px;top:437px;font-size:10px;line-height:10px;color:#e8e8e8;transform:scaleX(0.9913);transform-origin:0 0;">1/29</div><div class="t" style="left:996.10px;top:449px;font-size:10px;line-height:10px;color:#e8e8e8;">20:00</div><div class="t" style="left:1056.60px;top:437px;font-size:10px;line-height:10px;color:#e8e8e8;transform:scaleX(0.9913);transform-origin:0 0;">1/30</div><div class="t" style="left:1056.10px;top:449px;font-size:10px;line-height:10px;color:#e8e8e8;">00:00</div><div class="t" style="left:1116.60px;top:437px;font-size:10px;line-height:10px;color:#e8e8e8;transform:scaleX(0.9913);transform-origin:0 0;">1/30</div><div class="t" style="left:1116.10px;top:449px;font-size:10px;line-height:10px;color:#e8e8e8;">04:00</div><div class="t" style="left:1176.60px;top:437px;font-size:10px;line-height:10px;color:#e8e8e8;transform:scaleX(0.9913);transform-origin:0 0;">1/30</div><div class="t" style="left:1176.10px;top:449px;font-size:10px;line-height:10px;color:#e8e8e8;">08:00</div><div class="t" style="left:1236.60px;top:437px;font-size:10px;line-height:10px;color:#e8e8e8;transform:scaleX(0.9913);transform-origin:0 0;">1/30</div><div class="t" style="left:1236.10px;top:449px;font-size:10px;line-height:10px;color:#e8e8e8;">12:00</div><div class="t" style="left:1296.60px;top:437px;font-size:10px;line-height:10px;color:#e8e8e8;transform:scaleX(0.9913);transform-origin:0 0;">1/30</div><div class="t" style="left:1296.10px;top:449px;font-size:10px;line-height:10px;color:#e8e8e8;">16:00</div><div class="t" style="left:932px;top:325px;font-size:14.4px;line-height:16px;color:#f0f0f0;transform:translate(-50%,-50%) rotate(-90deg);">Performance (%)</div><div class="r" style="left:921.7px;top:466px;width:71.4px;height:16px;background:#ccffcc;"></div><div class="t" style="left:922.50px;top:469px;font-size:12px;line-height:12px;color:#000;transform:scaleX(1.0492);transform-origin:0 0;">Please note:</div><div class="t" style="left:997.50px;top:469px;font-size:12px;line-height:12px;color:#b0b0b0;transform:scaleX(1.0809);transform-origin:0 0;">graph shows 10-minute averaged results, not the actual poll results.</div><div class="t" style="left:924.20px;top:488px;font-size:12px;line-height:12px;color:#c0c0c0;transform:scaleX(1.0349);transform-origin:0 0;">Report period:</div><div class="t" style="left:1055.50px;top:488px;font-size:12px;line-height:12px;color:#fff;transform:scaleX(1.0914);transform-origin:0 0;">1/29/2025 4:44 PM - 1/30/2025 4:44 PM (</div><div class="t u" style="left:1297.50px;top:488px;font-size:12px;line-height:12px;color:#1a9fd2;transform:scaleX(1.0493);transform-origin:0 0;">Default Reporting Period</div><div class="t" style="left:1435.60px;top:488px;font-size:12px;line-height:12px;color:#fff;transform:scaleX(1.2500);transform-origin:0 0;">)</div><div class="t" style="left:924.20px;top:508px;font-size:12px;line-height:12px;color:#c0c0c0;transform:scaleX(1.0521);transform-origin:0 0;">Report notes:</div><div class="t" style="left:1055.50px;top:508px;font-size:12px;line-height:12px;color:#fff;transform:scaleX(1.0774);transform-origin:0 0;">Created 1/29/25 5:37 PM, manually</div><div class="t" style="left:924.20px;top:527px;font-size:12px;line-height:12px;color:#c0c0c0;transform:scaleX(1.0769);transform-origin:0 0;">Path to this report:</div><div class="t u" style="left:1055.00px;top:528px;font-size:12px;line-height:12px;color:#1a9fd2;transform:scaleX(1.0717);transform-origin:0 0;">All Agents</div><div class="t" style="left:1119.30px;top:528px;font-size:12px;line-height:12px;color:#111;">/</div><div class="t u" style="left:1129.30px;top:528px;font-size:12px;line-height:12px;color:#1a9fd2;transform:scaleX(1.0443);transform-origin:0 0;">Local Agent</div><div class="t" style="left:1202.40px;top:528px;font-size:12px;line-height:12px;color:#111;">/</div><div class="t u" style="left:1212.40px;top:528px;font-size:12px;line-height:12px;color:#1a9fd2;transform:scaleX(1.0546);transform-origin:0 0;">Servers</div><div class="t" style="left:1263.50px;top:528px;font-size:12px;line-height:12px;color:#111;">/</div><div class="t u" style="left:1273.50px;top:528px;font-size:12px;line-height:12px;color:#1a9fd2;transform:scaleX(1.0729);transform-origin:0 0;">Monitoring Host (127.0.0.1)</div><div class="t" style="left:1437.00px;top:528px;font-size:12px;line-height:12px;color:#111;">/</div><div class="t u" style="left:1447.00px;top:528px;font-size:12px;line-height:12px;color:#1a9fd2;transform:scaleX(1.0597);transform-origin:0 0;">WMI CPU on Monitoring Host (127.0.0.1)</div><div class="t u" style="left:1055.00px;top:544px;font-size:12px;line-height:12px;color:#1a9fd2;transform:scaleX(1.0781);transform-origin:0 0;">All Monitor Types</div><div class="t" style="left:1161.10px;top:544px;font-size:12px;line-height:12px;color:#111;">/</div><div class="t u" style="left:1171.10px;top:544px;font-size:12px;line-height:12px;color:#1a9fd2;transform:scaleX(1.0712);transform-origin:0 0;">Resources - Windows/WMI</div><div class="t" style="left:1332.90px;top:544px;font-size:12px;line-height:12px;color:#111;">/</div><div class="t u" style="left:1342.90px;top:544px;font-size:12px;line-height:12px;color:#1a9fd2;transform:scaleX(0.9938);transform-origin:0 0;">WMI CPU</div><div class="t" style="left:1402.90px;top:544px;font-size:12px;line-height:12px;color:#111;">/</div><div class="t u" style="left:1412.90px;top:544px;font-size:12px;line-height:12px;color:#1a9fd2;transform:scaleX(1.0592);transform-origin:0 0;">WMI CPU on Monitoring Host (127.0.0.1)</div><div class="t" style="left:922.00px;top:593px;font-size:16px;line-height:16px;color:#1a9fd2;transform:scaleX(1.0098);transform-origin:0 0;">Performance and Availability Summary (with Trend Data)</div><div class="r" style="left:922px;top:622px;width:1px;height:103px;background:#6e6e6e;"></div><div class="r" style="left:1058px;top:622px;width:1px;height:103px;background:#6e6e6e;"></div><div class="r" style="left:1194px;top:622px;width:1px;height:103px;background:#6e6e6e;"></div><div class="r" style="left:1369px;top:622px;width:1px;height:103px;background:#6e6e6e;"></div><div class="r" style="left:1282px;top:641px;width:1px;height:84px;background:#6e6e6e;"></div><div class="r" style="left:1457px;top:641px;width:1px;height:84px;background:#6e6e6e;"></div><div class="r" style="left:1545px;top:641px;width:1px;height:84px;background:#6e6e6e;"></div><div class="r" style="left:1633px;top:641px;width:1px;height:84px;background:#6e6e6e;"></div><div class="r" style="left:923px;top:693px;width:798px;height:16px;background:#4a4a4a;"></div><div class="r" style="left:923px;top:709px;width:798px;height:16px;background:#5a5a5a;"></div><div class="r" style="left:1058px;top:693px;width:1px;height:32px;background:#6e6e6e;"></div><div class="r" style="left:1194px;top:693px;width:1px;height:32px;background:#6e6e6e;"></div><div class="r" style="left:1369px;top:693px;width:1px;height:32px;background:#6e6e6e;"></div><div class="r" style="left:1282px;top:693px;width:1px;height:32px;background:#6e6e6e;"></div><div class="r" style="left:1457px;top:693px;width:1px;height:32px;background:#6e6e6e;"></div><div class="r" style="left:1545px;top:693px;width:1px;height:32px;background:#6e6e6e;"></div><div class="r" style="left:1633px;top:693px;width:1px;height:32px;background:#6e6e6e;"></div><div class="t" style="left:933.20px;top:644px;font-size:13px;line-height:13px;color:#ffffff;">Name</div><div class="t" style="left:1068.20px;top:644px;font-size:13px;line-height:13px;color:#ffffff;transform:scaleX(1.0247);transform-origin:0 0;">States Graph</div><div class="t" style="left:1203.90px;top:626px;font-size:13px;line-height:13px;color:#ffffff;transform:scaleX(0.9904);transform-origin:0 0;">Availability</div><div class="t" style="left:1204.00px;top:645px;font-size:13px;line-height:13px;color:#a8a8a8;transform:scaleX(1.0790);transform-origin:0 0;">Up time, %</div><div class="t" style="left:1292.60px;top:645px;font-size:13px;line-height:13px;color:#a8a8a8;transform:scaleX(1.0303);transform-origin:0 0;">Down time,</div><div class="t" style="left:1292.60px;top:662px;font-size:13px;line-height:13px;color:#a8a8a8;">%</div><div class="t" style="left:1380.00px;top:626px;font-size:13px;line-height:13px;color:#ffffff;transform:scaleX(1.0481);transform-origin:0 0;">Performance</div><div class="t" style="left:1380.00px;top:645px;font-size:13px;line-height:13px;color:#a8a8a8;transform:scaleX(1.0600);transform-origin:0 0;">Min</div><div class="t" style="left:1467.80px;top:645px;font-size:13px;line-height:13px;color:#a8a8a8;transform:scaleX(1.0600);transform-origin:0 0;">Avg</div><div class="t" style="left:1556.30px;top:645px;font-size:13px;line-height:13px;color:#a8a8a8;transform:scaleX(1.0600);transform-origin:0 0;">Max</div><div class="t" style="left:1644.10px;top:645px;font-size:13px;line-height:13px;color:#a8a8a8;transform:scaleX(1.0600);transform-origin:0 0;">Current</div><div class="r" style="left:1059px;top:677px;width:135px;height:14px;background:#f0f0f0;"></div><div class="r" style="left:1064px;top:677px;width:123.5px;height:14px;background:#ccffcc;"></div><div class="r" style="left:1068.5px;top:677px;width:1px;height:14px;background:#eaffea;"></div><div class="r" style="left:1189.2px;top:677px;width:4.8px;height:14px;background:#ccffcc;"></div><div class="r" style="left:1059px;top:693px;width:135px;height:14px;background:#f0f0f0;"></div><div class="t" style="left:933.20px;top:680px;font-size:12px;line-height:12px;color:#ffffff;transform:scaleX(0.9727);transform-origin:0 0;">Base period</div><div class="t" style="left:1204.00px;top:680px;font-size:12px;line-height:12px;color:#ffffff;transform:scaleX(1.0800);transform-origin:0 0;">100.0</div><div class="t" style="left:1292.60px;top:680px;font-size:12px;line-height:12px;color:#ffffff;transform:scaleX(1.0800);transform-origin:0 0;">0.0</div><div class="t" style="left:1380.00px;top:680px;font-size:12px;line-height:12px;color:#ffffff;transform:scaleX(1.0800);transform-origin:0 0;">0</div><div class="t" style="left:1467.80px;top:680px;font-size:12px;line-height:12px;color:#ffffff;transform:scaleX(1.0800);transform-origin:0 0;">11</div><div class="t" style="left:1556.30px;top:680px;font-size:12px;line-height:12px;color:#ffffff;transform:scaleX(1.0800);transform-origin:0 0;">100</div><div class="t" style="left:1644.10px;top:680px;font-size:12px;line-height:12px;color:#ffffff;transform:scaleX(1.0800);transform-origin:0 0;">7 %</div><div class="t" style="left:933.20px;top:696px;font-size:12px;line-height:12px;color:#ffffff;transform:scaleX(0.9881);transform-origin:0 0;">Previous period</div><div class="t" style="left:1204.00px;top:696px;font-size:12px;line-height:12px;color:#ffffff;transform:scaleX(1.0800);transform-origin:0 0;">0.0</div><div class="t" style="left:1292.60px;top:696px;font-size:12px;line-height:12px;color:#ffffff;transform:scaleX(1.0800);transform-origin:0 0;">0.0</div><div class="t" style="left:1380.00px;top:696px;font-size:12px;line-height:12px;color:#ffffff;transform:scaleX(1.0800);transform-origin:0 0;">0</div><div class="t" style="left:1467.80px;top:696px;font-size:12px;line-height:12px;color:#ffffff;transform:scaleX(1.0800);transform-origin:0 0;">0</div><div class="t" style="left:1556.30px;top:696px;font-size:12px;line-height:12px;color:#ffffff;transform:scaleX(1.0800);transform-origin:0 0;">0</div><div class="t" style="left:933.20px;top:711px;font-size:12px;line-height:12px;color:#ffffff;transform:scaleX(0.9703);transform-origin:0 0;">Change</div><div class="t" style="left:1204.00px;top:711px;font-size:12px;line-height:12px;color:#ffffff;transform:scaleX(1.0800);transform-origin:0 0;">100.0</div><div class="t" style="left:1292.60px;top:711px;font-size:12px;line-height:12px;color:#ffffff;transform:scaleX(1.0800);transform-origin:0 0;">0.0</div><div class="t" style="left:1380.00px;top:711px;font-size:12px;line-height:12px;color:#ffffff;transform:scaleX(1.0800);transform-origin:0 0;">0</div><div class="t" style="left:1467.80px;top:711px;font-size:12px;line-height:12px;color:#ffffff;transform:scaleX(1.0800);transform-origin:0 0;">11</div><div class="t" style="left:1556.30px;top:711px;font-size:12px;line-height:12px;color:#ffffff;transform:scaleX(1.0800);transform-origin:0 0;">100</div><div class="t" style="left:922.00px;top:757px;font-size:16px;line-height:16px;color:#1a9fd2;transform:scaleX(0.9438);transform-origin:0 0;">States Log</div><div class="t" style="left:1326.00px;top:757px;font-size:16px;line-height:16px;color:#1a9fd2;transform:scaleX(0.9682);transform-origin:0 0;">States Summary</div><div class="r" style="left:922px;top:786px;width:1px;height:42px;background:#6e6e6e;"></div><div class="r" style="left:1053px;top:786px;width:1px;height:42px;background:#6e6e6e;"></div><div class="r" style="left:1185px;top:786px;width:1px;height:42px;background:#6e6e6e;"></div><div class="r" style="left:1326px;top:786px;width:1px;height:42px;background:#6e6e6e;"></div><div class="r" style="left:1458px;top:786px;width:1px;height:42px;background:#6e6e6e;"></div><div class="r" style="left:1589px;top:805px;width:1px;height:23px;background:#6e6e6e;"></div><div class="r" style="left:923px;top:805px;width:393px;height:22px;background:#4a4a4a;"></div><div class="r" style="left:1053px;top:805px;width:1px;height:22px;background:#6e6e6e;"></div><div class="r" style="left:1185px;top:805px;width:1px;height:22px;background:#6e6e6e;"></div><div class="t" style="left:933.00px;top:790px;font-size:13px;line-height:13px;color:#ffffff;transform:scaleX(1.0705);transform-origin:0 0;">State</div><div class="t" style="left:1064.00px;top:790px;font-size:13px;line-height:13px;color:#ffffff;transform:scaleX(1.0711);transform-origin:0 0;">From</div><div class="t" style="left:1194.80px;top:790px;font-size:13px;line-height:13px;color:#ffffff;transform:scaleX(1.2014);transform-origin:0 0;">To</div><div class="t" style="left:1337.30px;top:790px;font-size:13px;line-height:13px;color:#ffffff;transform:scaleX(1.0705);transform-origin:0 0;">State</div><div class="t" style="left:1468.30px;top:790px;font-size:13px;line-height:13px;color:#ffffff;transform:scaleX(1.0385);transform-origin:0 0;">Time</div><div class="t" style="left:933.20px;top:811px;font-size:12px;line-height:12px;color:#ffffff;transform:scaleX(1.0254);transform-origin:0 0;">Unknown</div><div class="r" style="left:1056px;top:808.5px;width:7px;height:15.5px;background:#f0f0f0;"></div><div class="t" style="left:1065.30px;top:811px;font-size:12px;line-height:12px;color:#ffffff;transform:scaleX(1.0609);transform-origin:0 0;">1/29/2025 4:44 PM</div><div class="r" style="left:1188px;top:808.5px;width:7px;height:15.5px;background:#f0f0f0;"></div><div class="t" style="left:1196.30px;top:811px;font-size:12px;line-height:12px;color:#ffffff;transform:scaleX(1.0609);transform-origin:0 0;">1/29/2025 5:37 PM</div><div class="t" style="left:1468.30px;top:809px;font-size:13px;line-height:13px;color:#a8a8a8;transform:scaleX(1.0378);transform-origin:0 0;">Hours</div><div class="t" style="left:1600.70px;top:809px;font-size:13px;line-height:13px;color:#a8a8a8;">%</div><div class="r" style="left:914px;top:830px;width:842px;height:2px;background:#8e8e8e;"></div><div class="r" style="left:914px;top:832px;width:842px;height:3px;background:#2b2b2b;"></div><div class="r" style="left:914px;top:835px;width:842px;height:2px;background:#8e8e8e;"></div><div class="r" style="left:914px;top:837px;width:842px;height:23px;background:#4a4640;"></div><div class="t" style="left:924.20px;top:843px;font-size:13px;line-height:13px;color:#f4f4f4;font-weight:bold;">Logs for the past 24 hours</div><div class="t" style="left:1614.90px;top:843px;font-size:12px;line-height:12px;color:#1a9fd2;transform:scaleX(0.9890);transform-origin:0 0;">Show</div><svg style="left:1650px;top:847px" width="9" height="5.5" viewBox="0 0 9 5.5"><path d="M0 0h9L4.5 5.5z" fill="#1a9fd2"/></svg><div class="t u" style="left:1673.20px;top:843px;font-size:12px;line-height:12px;color:#1a9fd2;transform:scaleX(1.0129);transform-origin:0 0;">Show full logs</div><div class="r" style="left:914px;top:860px;width:842px;height:162px;background:#3c3c3c;"></div><div class="r" style="left:1740px;top:860px;width:16px;height:162px;background:#474747;"></div><div class="r" style="left:1740px;top:860px;width:16px;height:17px;background:#2b2b2b;"></div><svg style="left:1743.5px;top:865px" width="9" height="5" viewBox="0 0 9 5"><path d="M0 5h9L4.5 0z" fill="#14b4e8"/></svg><div class="r" style="left:1740px;top:877.5px;width:16px;height:17px;background:#4d4a44;"></div><div class="r" style="left:1740px;top:1004px;width:16px;height:17px;background:#2b2b2b;"></div><svg style="left:1743.5px;top:1010px" width="9" height="5" viewBox="0 0 9 5"><path d="M0 0h9L4.5 5z" fill="#14b4e8"/></svg><div class="r" style="left:937px;top:999px;width:798px;height:15px;background:#678567;"></div><div class="t" style="left:939.80px;top:866px;font-size:12px;line-height:12px;color:#a4a4a4;">4:41 PM: Database configuration backup saved in &#x27;C:/ProgramData/IPNetwork Monitor/data/nms.gbak_config&#x27;</div><div class="t" style="left:939.80px;top:881px;font-size:12px;line-height:12px;color:#a4a4a4;transform:scaleX(0.9808);transform-origin:0 0;">4:41 PM: Database configuration backup started</div><div class="t" style="left:939.80px;top:896px;font-size:12px;line-height:12px;color:#a4a4a4;">4:11 PM: Database configuration backup saved in &#x27;C:/ProgramData/IPNetwork Monitor/data/nms.gbak_config&#x27;</div><div class="t" style="left:939.80px;top:911px;font-size:12px;line-height:12px;color:#a4a4a4;transform:scaleX(0.9842);transform-origin:0 0;">4:11 PM: Database configuration backup started</div><div class="t" style="left:939.80px;top:926px;font-size:12px;line-height:12px;color:#a4a4a4;">4:01 PM: Database configuration backup saved in &#x27;C:/ProgramData/IPNetwork Monitor/data/nms.gbak_config&#x27;</div><div class="t" style="left:939.80px;top:941px;font-size:12px;line-height:12px;color:#a4a4a4;transform:scaleX(0.9808);transform-origin:0 0;">4:01 PM: Database configuration backup started</div><div class="t" style="left:939.80px;top:956px;font-size:12px;line-height:12px;color:#a4a4a4;transform:scaleX(0.9463);transform-origin:0 0;">3:54 PM: Web server has started</div><div class="t" style="left:939.80px;top:971px;font-size:12px;line-height:12px;color:#a4a4a4;transform:scaleX(0.9733);transform-origin:0 0;">3:54 PM: Push notifications are available</div><div class="t" style="left:939.80px;top:986px;font-size:12px;line-height:12px;color:#a4a4a4;transform:scaleX(0.9802);transform-origin:0 0;">3:54 PM: Stopping the Web server for maintenance</div><div class="t" style="left:939.80px;top:1001px;font-size:12px;line-height:12px;color:#fff;transform:scaleX(0.9947);transform-origin:0 0;">3:54 PM: <span class="u">WMI CPU</span> on <span class="u">Monitoring Host</span>: State change [Unknown] -&gt; [OK]</div><div class="r" style="left:914px;top:1014px;width:826px;height:8px;overflow:hidden"><div class="t" style="left:25.80px;top:2px;font-size:12px;line-height:12px;color:#a4a4a4;transform:scaleX(0.9723);transform-origin:0 0;">3:53 PM: Agent &#x27;New Agent (10.0.2.15)&#x27;: agent connected to service from 10.0.2.15</div></div></body></html>
